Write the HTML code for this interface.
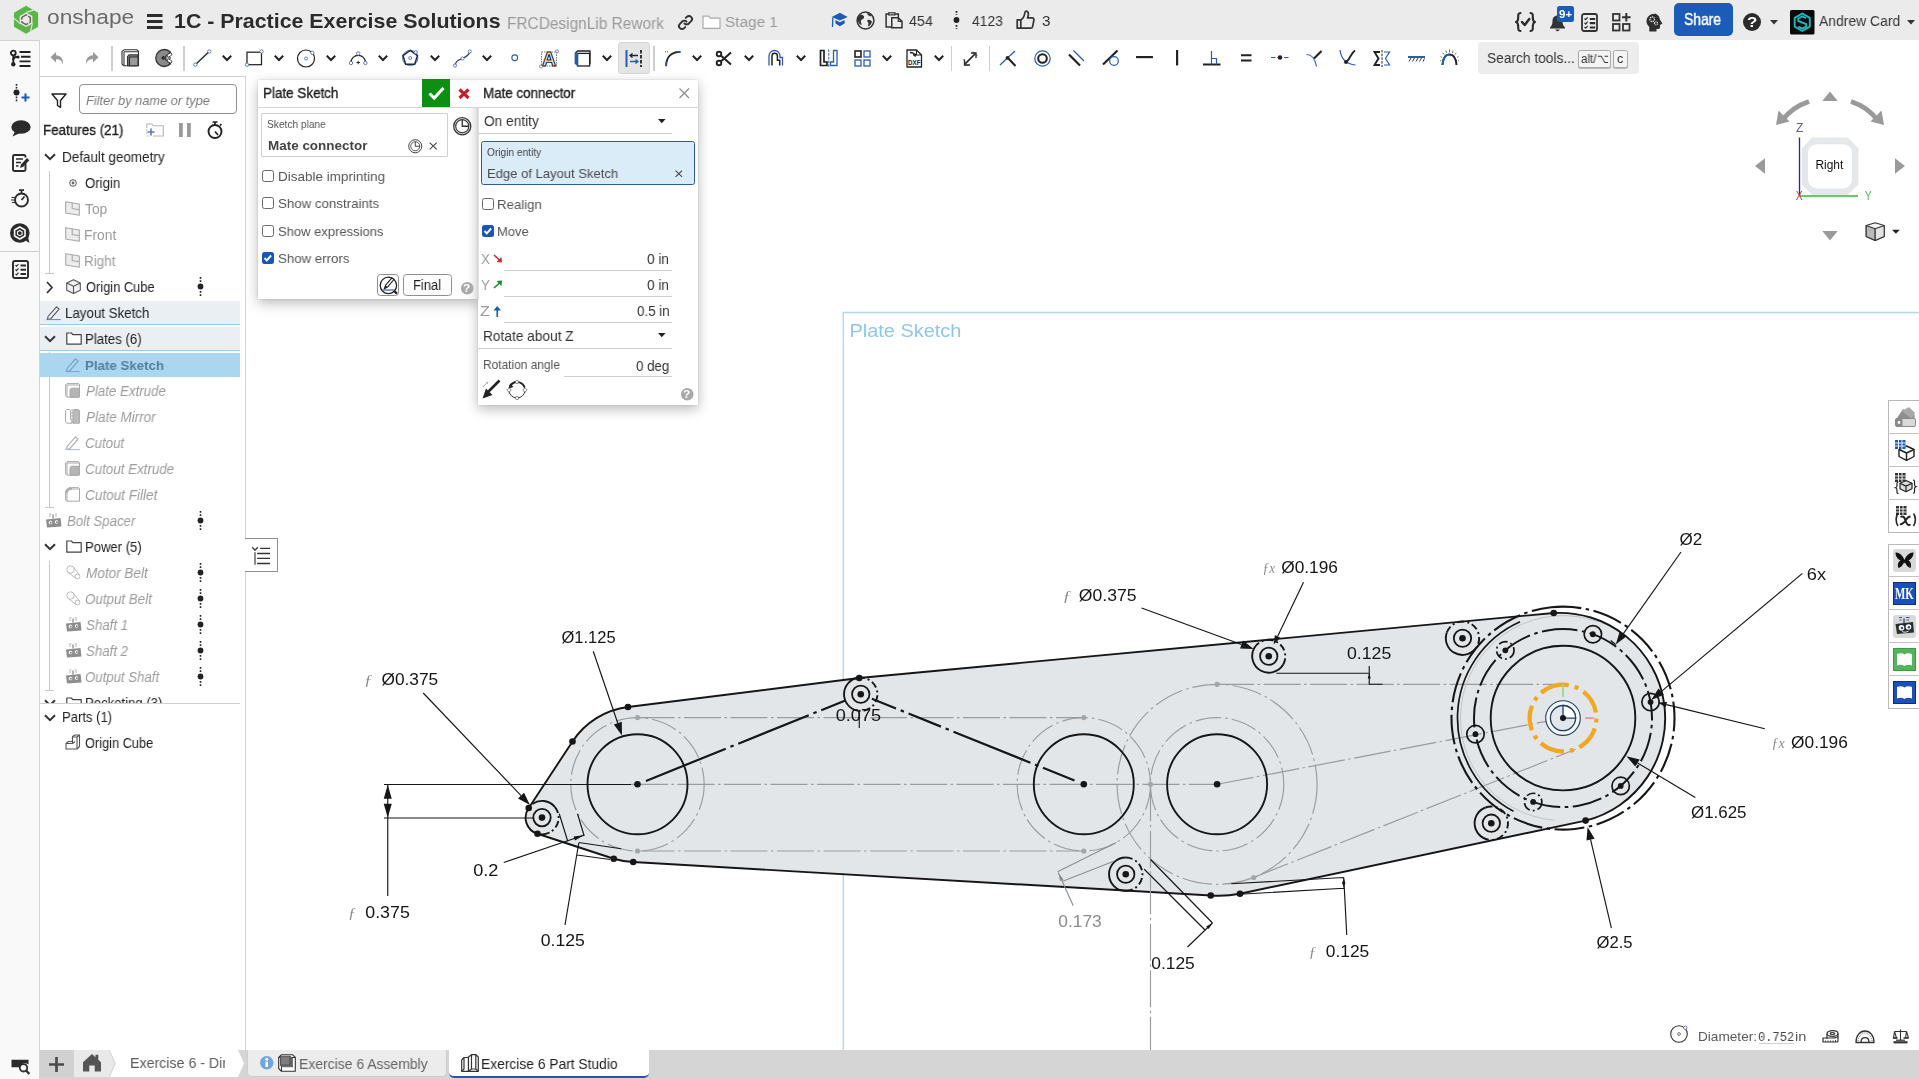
<!DOCTYPE html>
<html lang="en"><head><meta charset="utf-8"><title>1C - Practice Exercise Solutions | Exercise 6 Part Studio</title>
<style>
*{box-sizing:border-box;margin:0;padding:0}
html,body{width:1919px;height:1079px;overflow:hidden;background:#fff;font-family:"Liberation Sans",sans-serif;}
body{position:relative}
.t{position:absolute;white-space:nowrap;line-height:1;transform-origin:0 50%;display:block;will-change:transform}
.i{position:absolute;overflow:visible;display:block}
.abs{position:absolute}
#topbar{position:absolute;left:0;top:0;width:1919px;height:40px;background:#ebebeb}

#cv{position:absolute;left:0;top:0;will-change:transform}
#cv text{font-family:"Liberation Sans",sans-serif}

#toolbar{position:absolute;left:40px;top:40px;width:1879px;height:37px;background:#fff}
#rail{position:absolute;left:0;top:40px;width:40px;height:1039px;background:#f9f9f9;border-right:1px solid #d4d4d4;border-top:1px solid #d2d2d2}
.sep{position:absolute;top:45.500px;width:1.500px;height:25px;background:#cdcdcd}

#fpanel{position:absolute;left:40px;top:76px;width:206px;height:974px;background:#fff;border-right:1px solid #d4d4d4;border-top:1px solid #d0d0d0}
.rowbg{position:absolute;left:40px;width:200px}

.dlg{position:absolute;background:#fff;box-shadow:0 4px 12px rgba(0,0,0,.28),0 0 2px rgba(0,0,0,.14)}
.hl{position:absolute;height:1px;background:#cfcfcf}
.cb{position:absolute;width:11.500px;height:11.500px;border:1.200px solid #6a6a6a;border-radius:2.500px;background:#fff}
.cbc{position:absolute;width:11.500px;height:11.500px;border-radius:2.500px;background:#1b56b5}
.btn{position:absolute;border:1px solid #8f8f8f;border-radius:3.500px;background:#fff}

.sp{position:absolute;left:1888px;width:32px;background:#fff;border:1px solid #b9b9b9;border-right:none}
.spl{position:absolute;left:1888px;width:31px;height:1px;background:#c4c4c4}

#bbar{position:absolute;left:40px;top:1050px;width:1879px;height:29px;background:#d5d5d5}
</style></head>
<body>
<!-- part_canvas -->
<svg id="cv" width="1919" height="1079" viewBox="0 0 1919 1079">
<path d="M1919 312.500H843.200V1050" fill="none" stroke="#b3d8ee" stroke-width="1.400"/>
<text x="849.41" y="336.9" font-size="17.5" fill="#8fc7ea" textLength="111.92" lengthAdjust="spacingAndGlyphs" >Plate Sketch</text>
<path d="M528.75 808L572.5 741.5A77.800 77.800 0 0 1 628 707L859.25 678L1553.75 613A105.500 105.500 0 0 1 1585.6 820.6L1240 893.75A111.200 111.200 0 0 1 1210.75 895.5L633.25 862A77.800 77.800 0 0 1 613.75 858.75L537.5 833.75A16.700 16.700 0 0 1 528.75 808Z" fill="#e3e6e9" stroke="#161616" stroke-width="1.900" stroke-linejoin="round"/>
<g fill="none" stroke="#9b9b9b" stroke-width="1.150" stroke-dasharray="37 3.500 2.500 3.500">
<circle cx="637.5" cy="784.3" r="66.700" stroke-dasharray="26 4 2.500 4"/>
<circle cx="1083.8" cy="784.3" r="66.700" stroke-dasharray="26 4 2.500 4"/>
<circle cx="1217.1" cy="784.3" r="66.700" stroke-dasharray="26 4 2.500 4"/>
<circle cx="1217.1" cy="784.3" r="100" stroke-dasharray="30 4 2.500 4"/>
<path d="M637.5 717.600H1083.8"/><path d="M637.5 851H1083.8"/><path d="M631 784.300H1217.1"/>
<path d="M1150.500 784.300V1050"/>
<path d="M1217.1 684.300H1563"/>
<path d="M1217.1 784.3L1563.0 718.1"/>
<path d="M1253.750 877.500L1575.500 749.300"/>
</g>
<path d="M1554.07 820.21A102.5 102.5 0 1 1 1598.06 621.78" fill="none" stroke="#c2c2c2" stroke-width="1"/>
<circle cx="637.50" cy="717.60" r="2.6" fill="#a5a5a5"/>
<circle cx="637.50" cy="851.00" r="2.6" fill="#a5a5a5"/>
<circle cx="1083.80" cy="717.60" r="2.6" fill="#a5a5a5"/>
<circle cx="1083.80" cy="851.00" r="2.6" fill="#a5a5a5"/>
<circle cx="1150.50" cy="784.30" r="2.6" fill="#a5a5a5"/>
<circle cx="1217.10" cy="684.30" r="2.6" fill="#a5a5a5"/>
<circle cx="1253.75" cy="877.50" r="2.6" fill="#a5a5a5"/>
<circle cx="637.5" cy="784.3" r="50" fill="none" stroke="#161616" stroke-width="1.900"/>
<circle cx="1083.8" cy="784.3" r="50" fill="none" stroke="#161616" stroke-width="1.900"/>
<circle cx="1217.1" cy="784.3" r="50" fill="none" stroke="#161616" stroke-width="1.900"/>
<circle cx="1563.0" cy="718.1" r="72.300" fill="none" stroke="#161616" stroke-width="1.900"/>
<path d="M646.0 780.9L851.75 697.85" fill="none" stroke="#161616" stroke-width="2.200" stroke-dasharray="86 5 3.500 5 76 5 3.500 5 26 100"/>
<path d="M1074.5 780.55L869.75 697.85" fill="none" stroke="#161616" stroke-width="2.200" stroke-dasharray="34 5 3.500 5 83 5 3.500 5 35 5 3.500 5 26 100"/>
<path d="M1513.47 811.25A105.5 105.5 0 0 1 1520.09 621.72" fill="none" stroke="#161616" stroke-width="1.700"/>
<circle cx="1563.0" cy="718.1" r="89" fill="none" stroke="#161616" stroke-width="2" stroke-dasharray="30 4.500 3.500 4.500" transform="rotate(-100 1563.0 718.1)"/>
<circle cx="1563.0" cy="718.1" r="111.500" fill="none" stroke="#161616" stroke-width="2.100" stroke-dasharray="30 4.500 3.500 4.500" transform="rotate(-96 1563.0 718.1)"/>
<circle cx="1592.86" cy="634.26" r="8.700" fill="none" stroke="#161616" stroke-width="1.700"/><circle cx="1592.86" cy="634.26" r="2.9" fill="#161616"/>
<circle cx="1505.32" cy="650.32" r="8.700" fill="none" stroke="#161616" stroke-width="1.700" stroke-dasharray="9 3 2 3"/><circle cx="1505.32" cy="650.32" r="2.9" fill="#161616"/>
<circle cx="1475.46" cy="734.17" r="8.700" fill="none" stroke="#161616" stroke-width="1.700"/><circle cx="1475.46" cy="734.17" r="2.9" fill="#161616"/>
<circle cx="1533.14" cy="801.94" r="8.700" fill="none" stroke="#161616" stroke-width="1.700" stroke-dasharray="9 3 2 3"/><circle cx="1533.14" cy="801.94" r="2.9" fill="#161616"/>
<circle cx="1620.68" cy="785.88" r="8.700" fill="none" stroke="#161616" stroke-width="1.700"/><circle cx="1620.68" cy="785.88" r="2.9" fill="#161616"/>
<circle cx="1650.54" cy="702.03" r="8.700" fill="none" stroke="#161616" stroke-width="1.700"/><circle cx="1650.54" cy="702.03" r="2.9" fill="#161616"/>
<circle cx="542" cy="817.6" r="8.700" fill="none" stroke="#161616" stroke-width="1.800"/><circle cx="542.00" cy="817.60" r="3.3" fill="#161616"/>
<circle cx="860.75" cy="694.25" r="8.700" fill="none" stroke="#161616" stroke-width="1.800"/><circle cx="860.75" cy="694.25" r="3.3" fill="#161616"/>
<circle cx="1268.75" cy="656.25" r="8.700" fill="none" stroke="#161616" stroke-width="1.800"/><circle cx="1268.75" cy="656.25" r="3.3" fill="#161616"/>
<circle cx="1462.5" cy="638.25" r="8.700" fill="none" stroke="#161616" stroke-width="1.800"/><circle cx="1462.50" cy="638.25" r="3.3" fill="#161616"/>
<circle cx="1491.3" cy="823.2" r="8.700" fill="none" stroke="#161616" stroke-width="1.800"/><circle cx="1491.30" cy="823.20" r="3.3" fill="#161616"/>
<circle cx="1125.75" cy="874.25" r="8.700" fill="none" stroke="#161616" stroke-width="1.800"/><circle cx="1125.75" cy="874.25" r="3.3" fill="#161616"/>
<path d="M532.42 803.92A16.7 16.7 0 0 1 554.79 806.87" fill="none" stroke="#161616" stroke-width="1.900"/>
<path d="M554.79 806.87A16.7 16.7 0 0 1 549.58 832.48" fill="none" stroke="#161616" stroke-width="1.900" stroke-dasharray="7 3 2 3"/>
<path d="M549.58 832.48A16.7 16.7 0 0 1 536.29 833.29" fill="none" stroke="#161616" stroke-width="1.900"/>
<path d="M857.85 710.70A16.7 16.7 0 0 1 857.85 677.80" fill="none" stroke="#161616" stroke-width="1.900"/>
<path d="M857.85 677.80A16.7 16.7 0 1 1 857.85 710.70" fill="none" stroke="#161616" stroke-width="1.900" stroke-dasharray="7 3 2 3"/>
<path d="M1283.21 664.60A16.7 16.7 0 0 1 1254.29 647.90" fill="none" stroke="#161616" stroke-width="1.900"/>
<path d="M1254.29 647.90A16.7 16.7 0 0 1 1283.21 664.60" fill="none" stroke="#161616" stroke-width="1.900" stroke-dasharray="7 3 2 3"/>
<path d="M1475.29 648.98A16.7 16.7 0 0 1 1446.81 632.54" fill="none" stroke="#161616" stroke-width="1.900"/>
<path d="M1446.81 632.54A16.7 16.7 0 1 1 1475.29 648.98" fill="none" stroke="#161616" stroke-width="1.900" stroke-dasharray="7 3 2 3"/>
<path d="M1488.40 839.65A16.7 16.7 0 0 1 1485.59 807.51" fill="none" stroke="#161616" stroke-width="1.900"/>
<path d="M1485.59 807.51A16.7 16.7 0 1 1 1488.40 839.65" fill="none" stroke="#161616" stroke-width="1.900" stroke-dasharray="7 3 2 3"/>
<path d="M1125.75 890.95A16.7 16.7 0 0 1 1125.75 857.55" fill="none" stroke="#161616" stroke-width="1.900"/>
<path d="M1125.75 857.55A16.7 16.7 0 0 1 1125.75 890.95" fill="none" stroke="#161616" stroke-width="1.900" stroke-dasharray="7 3 2 3"/>
<circle cx="528.75" cy="808.00" r="3.3" fill="#161616"/>
<circle cx="572.50" cy="741.50" r="3.3" fill="#161616"/>
<circle cx="628.00" cy="707.00" r="3.3" fill="#161616"/>
<circle cx="859.25" cy="678.00" r="3.3" fill="#161616"/>
<circle cx="1553.75" cy="613.00" r="3.3" fill="#161616"/>
<circle cx="1585.60" cy="820.60" r="3.3" fill="#161616"/>
<circle cx="1240.00" cy="893.75" r="3.3" fill="#161616"/>
<circle cx="1210.75" cy="895.50" r="3.3" fill="#161616"/>
<circle cx="633.25" cy="862.00" r="3.3" fill="#161616"/>
<circle cx="613.75" cy="858.75" r="3.3" fill="#161616"/>
<circle cx="537.50" cy="833.75" r="3.3" fill="#161616"/>
<circle cx="637.50" cy="784.30" r="3.3" fill="#161616"/>
<circle cx="1083.80" cy="784.30" r="3.3" fill="#161616"/>
<circle cx="1217.10" cy="784.30" r="3.3" fill="#161616"/>
<circle cx="1563.0" cy="718.1" r="33.400" fill="none" stroke="#f2a724" stroke-width="4.300" stroke-dasharray="25 6 4 6" transform="rotate(-123 1563.0 718.1)"/>
<path d="M1563.0 684.1V697.1" stroke="#96d98a" stroke-width="1.800"/><path d="M1585.0 718.1H1594.0" stroke="#ec96a6" stroke-width="1.800"/>
<circle cx="1563.0" cy="718.1" r="17.300" fill="#f4f7fa" stroke="#24405c" stroke-width="1.100"/><circle cx="1563.0" cy="718.1" r="12.600" fill="#e1e7ed" stroke="#24405c" stroke-width="1.300"/>
<path d="M1563.0 718.1V705.5A12.600 12.600 0 0 1 1575.6 718.1z" fill="#fff" stroke="#24405c" stroke-width="1.300"/>
<circle cx="1563.00" cy="718.10" r="3" fill="#161616"/>
<g fill="none" stroke="#161616" stroke-width="1.150">
<path d="M384 784.500H631M384 818H534M387.750 784.500V896"/>
<path d="M503.750 862.500L583.750 835.300M559.250 813.750L567.800 841.500M577.500 813.750L584.200 836"/>
<path d="M565 925L578.750 843M578.750 842.500L621.250 848.750M577.300 855L610 859.500"/>
<path d="M1276.250 673.250H1369.250M1369.250 666V684.250H1382.500"/>
<path d="M1187.500 947L1212.500 923M1150.500 859.500L1212.500 923M1144.250 869.250L1205 930"/>
<path d="M1346.750 935L1343.750 877.500M1231.250 883.750L1343.750 877.500M1240 894.250L1343.750 888.250"/>
<path d="M859.250 712V728"/>
</g>
<g fill="none" stroke="#8d8d8d" stroke-width="1.100"><path d="M1073.250 905.750L1058.250 872.500M1057.500 871.750L1116.250 842.500M1062 881.500L1113.750 861.250"/></g>
<path d="M1058.50 873.00L1059.92 881.12L1063.58 879.50z" fill="#8d8d8d"/>
<path d="M387.75 784.80L383.75 798.80L391.75 798.80z" fill="#161616"/><path d="M387.75 817.70L391.75 803.70L383.75 803.70z" fill="#161616"/>
<path d="M583.75 835.30L573.57 836.44L574.99 840.60z" fill="#161616"/>
<path d="M1343.75 877.80L1342.15 883.80L1345.35 883.80z" fill="#161616"/><path d="M1343.75 888.20L1345.35 882.20L1342.15 882.20z" fill="#161616"/>
<path d="M1369.25 673.50L1367.75 678.50L1370.75 678.50z" fill="#161616"/>
<path d="M1212.50 923.00L1206.15 926.46L1208.61 929.09z" fill="#161616"/>
<path d="M530.00 805.00L524.07 792.69L517.99 798.49z" fill="#161616"/><path d="M521.03 795.59L423.25 693.00" stroke="#161616" stroke-width="1.15"/>
<path d="M622.00 735.50L621.78 721.84L613.83 724.55z" fill="#161616"/><path d="M617.80 723.20L593.25 651.25" stroke="#161616" stroke-width="1.15"/>
<path d="M1253.70 649.00L1242.93 640.59L1240.05 648.48z" fill="#161616"/><path d="M1241.49 644.53L1141.60 608.00" stroke="#161616" stroke-width="1.15"/>
<path d="M1273.70 644.50L1280.29 637.68L1274.88 635.09z" fill="#161616"/><path d="M1277.59 636.38L1303.50 582.30" stroke="#161616" stroke-width="1.15"/>
<path d="M1615.70 644.50L1626.63 636.30L1619.77 631.46z" fill="#161616"/><path d="M1623.20 633.88L1681.00 552.00" stroke="#161616" stroke-width="1.15"/>
<path d="M1651.20 700.00L1663.86 694.87L1658.47 688.43z" fill="#161616"/><path d="M1661.17 691.65L1802.40 573.40" stroke="#161616" stroke-width="1.15"/>
<path d="M1657.70 702.50L1665.82 707.17L1667.06 702.12z" fill="#161616"/><path d="M1666.44 704.65L1764.80 728.80" stroke="#161616" stroke-width="1.15"/>
<path d="M1626.40 756.30L1635.39 766.59L1639.71 759.38z" fill="#161616"/><path d="M1637.55 762.98L1695.30 797.60" stroke="#161616" stroke-width="1.15"/>
<path d="M1587.60 827.00L1586.49 840.62L1594.66 838.69z" fill="#161616"/><path d="M1590.58 839.65L1611.40 928.20" stroke="#161616" stroke-width="1.15"/>
<path d="M1615.700 644.500l-5 -4" stroke="#161616" stroke-width="1.150"/>
<text x="348" y="917.5" font-size="15" fill="#8a8a8a" font-style="italic" style="font-family:'Liberation Serif',serif" textLength="8.00" lengthAdjust="spacingAndGlyphs">ƒ</text><text x="365.22" y="917.5" font-size="16.2" fill="#161616" textLength="44.61" lengthAdjust="spacingAndGlyphs" >0.375</text>
<text x="473.21" y="876.25" font-size="16.2" fill="#161616" textLength="25.20" lengthAdjust="spacingAndGlyphs" >0.2</text>
<text x="540.72" y="946.25" font-size="16.2" fill="#161616" textLength="44.10" lengthAdjust="spacingAndGlyphs" >0.125</text>
<text x="364" y="685" font-size="15" fill="#8a8a8a" font-style="italic" style="font-family:'Liberation Serif',serif" textLength="8.50" lengthAdjust="spacingAndGlyphs">ƒ</text><text x="381.48" y="685" font-size="16.2" fill="#161616" textLength="56.71" lengthAdjust="spacingAndGlyphs" >Ø0.375</text>
<text x="561.50" y="643" font-size="16.2" fill="#161616" textLength="54.16" lengthAdjust="spacingAndGlyphs" >Ø1.125</text>
<text x="835.71" y="720.5" font-size="16.2" fill="#161616" textLength="45.38" lengthAdjust="spacingAndGlyphs" >0.075</text>
<text x="1062.4" y="601.4" font-size="15" fill="#8a8a8a" font-style="italic" style="font-family:'Liberation Serif',serif" textLength="8.90" lengthAdjust="spacingAndGlyphs">ƒ</text><text x="1078.77" y="601.4" font-size="16.2" fill="#161616" textLength="57.73" lengthAdjust="spacingAndGlyphs" >Ø0.375</text>
<text x="1262.6" y="573.4" font-size="15" fill="#8a8a8a" font-style="italic" style="font-family:'Liberation Serif',serif" textLength="12.40" lengthAdjust="spacingAndGlyphs">ƒx</text><text x="1281.18" y="573.4" font-size="16.2" fill="#161616" textLength="56.81" lengthAdjust="spacingAndGlyphs" >Ø0.196</text>
<text x="1346.97" y="658.9" font-size="16.2" fill="#161616" textLength="44.35" lengthAdjust="spacingAndGlyphs" >0.125</text>
<text x="1058.23" y="927" font-size="16.2" fill="#8d8d8d" textLength="43.58" lengthAdjust="spacingAndGlyphs" >0.173</text>
<text x="1151.23" y="968.75" font-size="16.2" fill="#161616" textLength="43.58" lengthAdjust="spacingAndGlyphs" >0.125</text>
<text x="1308.75" y="957" font-size="15" fill="#8a8a8a" font-style="italic" style="font-family:'Liberation Serif',serif" textLength="7.50" lengthAdjust="spacingAndGlyphs">ƒ</text><text x="1325.73" y="957" font-size="16.2" fill="#161616" textLength="43.58" lengthAdjust="spacingAndGlyphs" >0.125</text>
<text x="1679.49" y="544.5" font-size="16.2" fill="#161616" textLength="22.76" lengthAdjust="spacingAndGlyphs" >Ø2</text>
<text x="1806.89" y="580" font-size="16.2" fill="#161616" textLength="19.22" lengthAdjust="spacingAndGlyphs" >6x</text>
<text x="1771.6" y="747.5" font-size="15" fill="#8a8a8a" font-style="italic" style="font-family:'Liberation Serif',serif" textLength="13.20" lengthAdjust="spacingAndGlyphs">ƒx</text><text x="1791.08" y="747.5" font-size="16.2" fill="#161616" textLength="56.81" lengthAdjust="spacingAndGlyphs" >Ø0.196</text>
<text x="1690.99" y="817.6" font-size="16.2" fill="#161616" textLength="55.48" lengthAdjust="spacingAndGlyphs" >Ø1.625</text>
<text x="1596.50" y="948.25" font-size="16.2" fill="#161616" textLength="36.13" lengthAdjust="spacingAndGlyphs" >Ø2.5</text>
</svg>
<!-- part_top -->
<div id="topbar"></div>
<svg class="i" style="left:0;top:0" width="45" height="40" viewBox="0 0 45 40"><path d="M26.05 5.80L13.97 12.78L13.97 26.73L26.05 33.70L38.13 26.73L38.13 12.78z" fill="#5cb647"/><path d="M26.05 12.45L19.73 16.10L19.73 23.40L26.05 27.05L32.37 23.40L32.37 16.10z" fill="#ebebeb"/><path d="M26.05 12.45L33.54 10.12M19.73 23.40L13.97 18.08M32.37 23.40L30.64 31.05" stroke="#ebebeb" stroke-width="1.100" fill="none"/><path d="M27.11 15.46L26.05 14.85L21.81 17.30L21.81 19.75M21.81 20.97L21.81 22.20L26.05 24.65L28.17 23.43M29.23 22.81L30.29 22.20L30.29 17.30L28.17 16.07" stroke="#666" stroke-width="1.500" fill="none" stroke-linejoin="round"/></svg>
<span class="t" style="left:47.09px;top:7.00px;font-size:20.5px;color:#6a6a6a;transform:scaleX(1.1079);">onshape</span>
<svg class="i" style="left:147.2px;top:14px;" width="15.5" height="15" viewBox="0 0 15.5 15"><path d="M0 1.5H15.5M0 7.5H15.5M0 13.5H15.5" stroke="#2b2b2b" stroke-width="3"/></svg>
<span class="t" style="left:173.72px;top:10.00px;font-size:21px;color:#2b2b2b;transform:scaleX(1.0173);font-weight:bold;">1C - Practice Exercise Solutions</span>
<span class="t" style="left:507.47px;top:16.00px;font-size:16px;color:#9a9a9a;transform:scaleX(0.9641);">FRCDesignLib Rework</span>
<svg class="i" style="left:678px;top:15px;" width="15" height="15" viewBox="0 0 15 15"><g fill="none" stroke="#333" stroke-width="1.9" stroke-linecap="round"><path d="M6.5 8.5 a3 3 0 0 0 4.3 0 l2.3-2.3 a3 3 0 0 0-4.3-4.3 l-1 1"/><path d="M8.5 6.5 a3 3 0 0 0-4.3 0 l-2.3 2.3 a3 3 0 0 0 4.3 4.3 l1-1"/></g></svg>
<svg class="i" style="left:702px;top:15px;" width="19" height="14" viewBox="0 0 19 14"><path d="M1 1.2h5.6l1.6 1.9H18v10.2H1z" fill="#fff" stroke="#aaa" stroke-width="1.2" stroke-linejoin="round"/></svg>
<span class="t" style="left:725.39px;top:14.00px;font-size:15.5px;color:#9a9a9a;transform:scaleX(0.9889);">Stage 1</span>
<svg class="i" style="left:829.5px;top:11.5px;" width="19" height="16" viewBox="0 0 19 16"><path d="M1.750 5.100L9.900 0.700 17.700 5.100 9.900 8.600z" fill="#1b5cb8"/><path d="M5.500 8v3.600L9.900 14.200 14.600 11.600V8L9.900 10.300z" fill="#1b5cb8"/><path d="M2.800 5.600L2.500 15" stroke="#1b5cb8" stroke-width="1.300"/></svg>
<svg class="i" style="left:855.5px;top:11px;" width="19" height="19" viewBox="0 0 19 19"><circle cx="9.5" cy="9.5" r="8.4" fill="#ececec" stroke="#333" stroke-width="1.5"/><path d="M5 3.5c2 .3 3.5 1.5 3 3.2-.5 1.6-2.6 1.3-3.1 3-.4 1.5 1 2.7.6 4.6C3.200 13 1.6 11 1.7 8.500 1.800 6.500 3 4.500 5 3.500Z M11.500 9c1.800-.5 3.800.3 4.500 1.800-.6 2.300-2 3.900-3.800 4.800-.6-1.400.6-2.400.1-3.800-.4-1.100-1.600-1.500-.8-2.800Z M11 1.800c2 .4 3.600 1.500 4.700 3.100-1.200.6-2.600.3-3.400-.6-.700-.8-1.300-1.500-1.300-2.500Z" fill="#333"/></svg>
<svg class="i" style="left:884.5px;top:11.5px;" width="18" height="17" viewBox="0 0 18 17"><g fill="none" stroke="#333" stroke-width="1.500" stroke-linejoin="miter"><path d="M4 1.900H1.100V15H6.800M9.900 1.900H13.300V5.500"/><rect x="3.700" y="0.800" width="6.200" height="2.100" stroke-width="1.200"/><path d="M6.750 5.700H13.300L17 9.400V15.700H6.750z" fill="#ebebeb"/><path d="M13.300 5.700V9.400H17" stroke-width="1.200"/></g></svg>
<span class="t" style="left:909.22px;top:14.00px;font-size:14.5px;color:#333;transform:scaleX(0.9791);">454</span>
<svg class="i" style="left:953px;top:11px;" width="7" height="18" viewBox="0 0 7 18"><circle cx="3.500" cy="9" r="2.900" fill="#222"/><path d="M3.500 0v4M3.500 14v4" stroke="#222" stroke-width="1.700" stroke-dasharray="1.800 1.400"/></svg>
<span class="t" style="left:972.22px;top:14.00px;font-size:14.5px;color:#333;transform:scaleX(0.9534);">4123</span>
<svg class="i" style="left:1016px;top:10px;" width="19" height="20" viewBox="0 0 19 20"><path d="M1.200 9.800h3.600v8.400H1.200z M4.800 10.200c1.800-1.200 3.300-3.400 3.700-5.600.2-1.400.1-3 1.300-3.400 1.500-.4 2.600 1.200 2.600 3 0 1.300-.5 2.600-.9 3.700h4.700c1.200 0 1.900 1 1.700 2.100l-1.300 6.600c-.2 1-.9 1.600-1.900 1.600H4.800" fill="none" stroke="#333" stroke-width="1.700" stroke-linejoin="round"/></svg>
<span class="t" style="left:1042.04px;top:14.00px;font-size:14.5px;color:#333;transform:scaleX(1.0556);">3</span>
<svg class="i" style="left:1515px;top:12px;" width="21" height="20" viewBox="0 0 21 20"><g fill="none" stroke="#2b2b2b" stroke-width="2.100" stroke-linecap="round" stroke-linejoin="round"><path d="M5.500 1C3 1 3.200 3 3.200 5.500 3.200 8 2.800 9.500 1 10c1.800.5 2.200 2 2.200 4.500 0 2.500-.2 4.500 2.300 4.500"/><path d="M15.500 1c2.500 0 2.300 2 2.300 4.500 0 2.500.4 4 2.200 4.500-1.800.5-2.200 2-2.200 4.500 0 2.500.2 4.500-2.300 4.500"/><path d="M7 10l2.700 3 4.600-6" stroke-width="2.500"/></g></svg>
<svg class="i" style="left:1549px;top:14px;" width="17" height="18" viewBox="0 0 17 18"><path d="M8.500 1.500c3 0 5 2.300 5 5.500 0 3.500 1 5 2.500 6.500v1H1v-1C2.500 12 3.500 10.500 3.500 7c0-3.200 2-5.500 5-5.500z" fill="#333"/><path d="M6.300 15.500a2.300 2.300 0 0 0 4.400 0z" fill="#333"/></svg>
<div class="abs" style="left:1557px;top:6px;width:16.500px;height:16px;background:#1b5cb8;border-radius:2.500px"></div>
<span class="t" style="left:1558.86px;top:9.00px;font-size:11.5px;color:#fff;transform:scaleX(0.9903);font-weight:bold;">9+</span>
<svg class="i" style="left:1581px;top:12.5px;" width="17" height="19" viewBox="0 0 17 19"><rect x="1" y="1" width="15" height="17" rx="2" fill="none" stroke="#333" stroke-width="1.800"/><path d="M3.500 5.500l1.200 1.200 2-2.400M3.500 9.800l1.200 1.200 2-2.400M3.500 14l1.200 1.200 2-2.400" fill="none" stroke="#333" stroke-width="1.200"/><path d="M8.800 6h5.400M8.800 10.200h5.400M8.800 14.500h5.400" stroke="#2b2b2b" stroke-width="2.200"/></svg>
<svg class="i" style="left:1612px;top:12.5px;" width="19" height="19" viewBox="0 0 19 19"><g fill="none" stroke="#333" stroke-width="1.800"><rect x="1" y="1" width="6.500" height="6.500"/><rect x="1" y="11" width="6.500" height="6.500"/><rect x="11" y="11" width="6.500" height="6.500"/><path d="M14.300 0v8.500M10 4.300h8.600" stroke-width="2"/></g></svg>
<svg class="i" style="left:1645px;top:12.5px;" width="18" height="19" viewBox="0 0 18 19"><g transform="translate(18 0) scale(-1 1)"><path d="M8.500.8c4.500 0 8 3.200 8 7.400 0 2.600-1.300 4.300-2.800 5.700v4.600H6.500v-2.600H4.600c-1 0-1.600-.6-1.600-1.600v-2.400L1.200 11c-.5-.2-.6-.7-.3-1.100L3 6.800C3.500 3.200 5.500.8 8.500.8z" fill="#2e2e2e"/><circle cx="10.800" cy="6.300" r="2.300" fill="none" stroke="#ebebeb" stroke-width="1.300" stroke-dasharray="1.100 0.700"/><circle cx="7" cy="10.300" r="1.500" fill="none" stroke="#ebebeb" stroke-width="1.100" stroke-dasharray="0.900 0.600"/></g></svg>
<div class="abs" style="left:1673.500px;top:3px;width:59px;height:33px;background:#1b5cb8;border-radius:5px"></div>
<span class="t" style="left:1684.44px;top:11.00px;font-size:16.5px;color:#fff;transform:scaleX(0.8424);-webkit-text-stroke:0.450px #fff;">Share</span>
<svg class="i" style="left:1743px;top:13px;" width="18" height="18" viewBox="0 0 18 18"><circle cx="9" cy="9" r="9" fill="#2b2b2b"/></svg>
<span class="t" style="left:1746.92px;top:14.00px;font-size:15.5px;color:#fff;transform:scaleX(1.0918);font-weight:bold;">?</span>
<svg class="i" style="left:1770px;top:19.5px;" width="8" height="4.5" viewBox="0 0 8 4.5"><path d="M0 0h8L4 4.500z" fill="#333"/></svg>
<svg class="i" style="left:1789.5px;top:9.5px;" width="24.5" height="24.5" viewBox="0 0 24.5 24.5"><rect width="24.500" height="24.500" rx="1.500" fill="#0a0a0a"/><g fill="none" stroke="#22b5c0" stroke-width="1.900" stroke-linejoin="round"><path d="M12.250 3.500L19.800 7.900V16.600L12.250 21 4.700 16.600V7.900z"/><path d="M16 8.200 12.250 6.300 8.300 8.500V11l7.900 3.200v2.500l-3.950 2-3.950-2"/></g></svg>
<span class="t" style="left:1819.00px;top:13.00px;font-size:15.5px;color:#383838;transform:scaleX(0.8985);">Andrew Card</span>
<svg class="i" style="left:1907px;top:19.5px;" width="8" height="4.5" viewBox="0 0 8 4.5"><path d="M0 0h8L4 4.500z" fill="#333"/></svg>
<!-- part_toolbar -->
<div id="toolbar"></div><div id="rail"></div>
<svg class="i" style="left:10px;top:49px;" width="21" height="19" viewBox="0 0 21 19"><g fill="none" stroke="#222" stroke-width="1.900"><circle cx="3.300" cy="4" r="2.400"/><path d="M3.300 6.500v7"/><path d="M3.300 11c0-2 1-3 3-3h1.200" /><path d="M9.500 3h11M11 7.700h9.500M9.500 12.400h11M9.500 17h11"/></g><circle cx="3.300" cy="15.200" r="2.200" fill="#222"/><circle cx="8" cy="8" r="1.600" fill="#222"/></svg>
<svg class="i" style="left:50px;top:50.5px;" width="14" height="14" viewBox="0 0 14 14"><path d="M6 1L0.500 6.200 6 11.500V8.200c3.600-.2 6 1 7 5.300C13.600 8 10.500 4.500 6 4.300z" fill="#999"/></svg>
<svg class="i" style="left:85px;top:50.5px;transform:scaleX(-1);" width="14" height="14" viewBox="0 0 14 14"><path d="M6 1L0.500 6.200 6 11.500V8.200c3.600-.2 6 1 7 5.300C13.600 8 10.500 4.500 6 4.300z" fill="#999"/></svg>
<div class="sep" style="left:111px"></div>
<div class="sep" style="left:183px"></div>
<div class="sep" style="left:653px"></div>
<div class="sep" style="left:950.5px"></div>
<div class="sep" style="left:988.5px"></div>
<svg class="i" style="left:121px;top:49px;" width="18" height="18" viewBox="0 0 18 18"><g stroke="#333" stroke-width="1.100" stroke-linejoin="round"><path d="M1 2.500L3 0.800h13l1.500 1.500v14.500H3L1 15z" fill="#fff"/><path d="M3 2.800h14.500M3 2.800V16.800" fill="none"/><path d="M6.500 7.500l1.500-1.700h9v9.500l-1.500 1.500H6.500z" fill="#777"/><path d="M8.500 8h8.500v8.800H8.500z" fill="#999"/></g></svg>
<svg class="i" style="left:155px;top:49px;" width="18" height="18" viewBox="0 0 18 18"><path d="M9 9L15.500 3.200A8.500 8.500 0 1 0 15.500 14.800z" fill="#8a8a8a" stroke="#333" stroke-width="1.300"/><ellipse cx="14.500" cy="6" rx="2.600" ry="1.500" transform="rotate(-35 14.500 6)" fill="#fff" stroke="#333" stroke-width="0.900"/><ellipse cx="14.500" cy="12" rx="2.600" ry="1.500" transform="rotate(35 14.500 12)" fill="#fff" stroke="#333" stroke-width="0.900"/><path d="M6.500 9H17M9 7l-2.500 2L9 11" fill="none" stroke="#111" stroke-width="1" stroke-dasharray="2.500 1"/></svg>
<svg class="i" style="left:193px;top:49px;" width="19" height="18" viewBox="0 0 19 18"><path d="M2.500 15.500L16 2.800" stroke="#222" stroke-width="1.300"/><circle cx="2.300" cy="15.700" r="1.700" fill="#fff" stroke="#5671b0" stroke-width="0.900"/><circle cx="16.300" cy="2.500" r="1.700" fill="#fff" stroke="#5671b0" stroke-width="0.900"/></svg>
<svg class="i" style="left:222px;top:55.2px;" width="10" height="6" viewBox="0 0 10 6"><path d="M0.800 0.800L5 5 9.200 0.800" fill="none" stroke="#222" stroke-width="2"/></svg>
<svg class="i" style="left:245px;top:49px;" width="19" height="18" viewBox="0 0 19 18"><rect x="2" y="3.200" width="14.500" height="12.500" fill="none" stroke="#222" stroke-width="1.250"/><circle cx="2" cy="15.700" r="1.700" fill="#fff" stroke="#5671b0" stroke-width="0.900"/><circle cx="16.500" cy="2.500" r="1.700" fill="#fff" stroke="#5671b0" stroke-width="0.900"/></svg>
<svg class="i" style="left:274px;top:55.2px;" width="10" height="6" viewBox="0 0 10 6"><path d="M0.800 0.800L5 5 9.200 0.800" fill="none" stroke="#222" stroke-width="2"/></svg>
<svg class="i" style="left:296.5px;top:48.5px;" width="19" height="19" viewBox="0 0 19 19"><circle cx="9" cy="9.500" r="8.500" fill="none" stroke="#222" stroke-width="1.200"/><circle cx="9" cy="9.500" r="1.500" fill="#fff" stroke="#5671b0" stroke-width="0.900"/><circle cx="15.300" cy="3.800" r="1.700" fill="#fff" stroke="#5671b0" stroke-width="0.900"/></svg>
<svg class="i" style="left:326px;top:55.2px;" width="10" height="6" viewBox="0 0 10 6"><path d="M0.800 0.800L5 5 9.200 0.800" fill="none" stroke="#222" stroke-width="2"/></svg>
<svg class="i" style="left:349px;top:48.5px;" width="19" height="19" viewBox="0 0 19 19"><path d="M2 13.500A7.200 7.200 0 0 1 16.400 13.500" fill="none" stroke="#222" stroke-width="1.250"/><circle cx="2" cy="14" r="1.700" fill="#fff" stroke="#5671b0" stroke-width="0.900"/><circle cx="16.400" cy="14" r="1.700" fill="#fff" stroke="#5671b0" stroke-width="0.900"/><circle cx="9.200" cy="4.500" r="1.700" fill="#fff" stroke="#5671b0" stroke-width="0.900"/><path d="M7.500 13.500h3.400M9.200 11.800v3.400" stroke="#222" stroke-width="1"/></svg>
<svg class="i" style="left:377.5px;top:55.2px;" width="10" height="6" viewBox="0 0 10 6"><path d="M0.800 0.800L5 5 9.200 0.800" fill="none" stroke="#222" stroke-width="2"/></svg>
<svg class="i" style="left:400.5px;top:48px;" width="19" height="19" viewBox="0 0 19 19"><circle cx="9.200" cy="10" r="7.700" fill="none" stroke="#5671b0" stroke-width="0.900"/><path d="M9.200 2.300L16.500 7.600 13.700 16.200H4.700L1.900 7.600z" fill="none" stroke="#1d2a44" stroke-width="1.500" stroke-linejoin="round"/><circle cx="9.200" cy="10" r="1.500" fill="#fff" stroke="#5671b0" stroke-width="0.900"/><circle cx="14.800" cy="4.200" r="1.600" fill="#fff" stroke="#5671b0" stroke-width="0.900"/></svg>
<svg class="i" style="left:429.5px;top:55.2px;" width="10" height="6" viewBox="0 0 10 6"><path d="M0.800 0.800L5 5 9.200 0.800" fill="none" stroke="#222" stroke-width="2"/></svg>
<svg class="i" style="left:452.5px;top:48.5px;" width="19" height="19" viewBox="0 0 19 19"><path d="M2 16.500C3 10.500 6.500 11 9.500 9.500S15.500 7 16.800 2.800" fill="none" stroke="#39435c" stroke-width="1.300"/><circle cx="2" cy="16.500" r="1.600" fill="#fff" stroke="#5671b0" stroke-width="0.900"/><circle cx="9.500" cy="9.500" r="1.600" fill="#fff" stroke="#5671b0" stroke-width="0.900"/><circle cx="16.800" cy="2.500" r="1.600" fill="#fff" stroke="#5671b0" stroke-width="0.900"/></svg>
<svg class="i" style="left:482px;top:55.2px;" width="10" height="6" viewBox="0 0 10 6"><path d="M0.800 0.800L5 5 9.200 0.800" fill="none" stroke="#222" stroke-width="2"/></svg>
<svg class="i" style="left:510.5px;top:54px;" width="7.5" height="7.5" viewBox="0 0 7.5 7.5"><circle cx="3.750" cy="3.750" r="2.900" fill="#fff" stroke="#2a5db0" stroke-width="1.100"/></svg>
<svg class="i" style="left:538.5px;top:48.5px;" width="20" height="19" viewBox="0 0 20 19"><rect x="2.500" y="3" width="15" height="14" fill="none" stroke="#555" stroke-width="0.800" stroke-dasharray="1.500 1"/><text x="3" y="17" font-size="19.500" font-weight="bold" font-family="Liberation Sans,sans-serif" fill="#fff" stroke="#222" stroke-width="1.100" textLength="14" lengthAdjust="spacingAndGlyphs">A</text><circle cx="2" cy="17.500" r="1.500" fill="#fff" stroke="#5671b0" stroke-width="0.800"/><circle cx="18" cy="2.300" r="1.500" fill="#fff" stroke="#5671b0" stroke-width="0.800"/></svg>
<svg class="i" style="left:573.5px;top:49.5px;" width="17" height="17" viewBox="0 0 17 17"><path d="M1 3.500L3.500 1h12.500v12.500L13.500 16" fill="none" stroke="#222" stroke-width="1.300" stroke-linejoin="round"/><rect x="3.600" y="3.400" width="12" height="12.600" fill="#fff" stroke="#222" stroke-width="1.300"/><path d="M1 3.500V13.500L3.500 16V3.400z" fill="#2a5db0" stroke="#2a5db0" stroke-width="0.800"/></svg>
<svg class="i" style="left:602px;top:55.2px;" width="10" height="6" viewBox="0 0 10 6"><path d="M0.800 0.800L5 5 9.200 0.800" fill="none" stroke="#222" stroke-width="2"/></svg>
<div class="abs" style="left:618px;top:41.500px;width:31.500px;height:32px;background:#e5e5e5;border:1px solid #d8d8d8;border-radius:3px"></div>
<svg class="i" style="left:625px;top:48.5px;" width="18" height="19" viewBox="0 0 18 19"><path d="M1.500 1v17" stroke="#2a5db0" stroke-width="2"/><path d="M16 1v17" stroke="#222" stroke-width="1.800" stroke-dasharray="3.500 1.500"/><path d="M5 6.500h8M7.500 4.500L5 6.500l2.500 2" fill="none" stroke="#222" stroke-width="1.300"/><path d="M5 12.500h8M10.500 10.500l2.500 2-2.500 2" fill="none" stroke="#2a5db0" stroke-width="1.300"/></svg>
<svg class="i" style="left:663.5px;top:48.5px;" width="17" height="19" viewBox="0 0 17 19"><path d="M1 2.800h3.500M2.200 14.500v3" stroke="#222" stroke-width="0.800" stroke-dasharray="1 1"/><path d="M2.200 17C2.200 8 7 3 16.500 2.800" fill="none" stroke="#222" stroke-width="1.700"/><path d="M11 2.800h5.500" stroke="#2a5db0" stroke-width="1.200"/><path d="M2.200 12v5" stroke="#2a5db0" stroke-width="1.200"/></svg>
<svg class="i" style="left:692px;top:55.2px;" width="10" height="6" viewBox="0 0 10 6"><path d="M0.800 0.800L5 5 9.200 0.800" fill="none" stroke="#222" stroke-width="2"/></svg>
<svg class="i" style="left:716px;top:49.5px;" width="16" height="17" viewBox="0 0 16 17"><g fill="none" stroke="#222" stroke-width="1.900"><circle cx="3" cy="4" r="2.300"/><circle cx="3" cy="13" r="2.300"/><path d="M4.800 5.500L15 14.500M4.800 11.500L15 2.500" stroke-width="2.100"/></g></svg>
<svg class="i" style="left:743.5px;top:55.2px;" width="10" height="6" viewBox="0 0 10 6"><path d="M0.800 0.800L5 5 9.200 0.800" fill="none" stroke="#222" stroke-width="2"/></svg>
<svg class="i" style="left:768px;top:49px;" width="15" height="18" viewBox="0 0 15 18"><path d="M1 16.500V7a5.500 5.500 0 0 1 11 0v1.500h2.500v8" fill="none" stroke="#2a5db0" stroke-width="1.300"/><path d="M4 16.500V7a2.700 2.700 0 0 1 5.400 0v4.300h2.300v5.200" fill="none" stroke="#222" stroke-width="1.500"/></svg>
<svg class="i" style="left:795.5px;top:55.2px;" width="10" height="6" viewBox="0 0 10 6"><path d="M0.800 0.800L5 5 9.200 0.800" fill="none" stroke="#222" stroke-width="2"/></svg>
<svg class="i" style="left:818.5px;top:49px;" width="19" height="18" viewBox="0 0 19 18"><path d="M1.500 1.500h3.500v11.500h3v3.500H1.500z" fill="none" stroke="#222" stroke-width="1.700"/><path d="M9.800 0.500v17.500" stroke="#2a5db0" stroke-width="1" stroke-dasharray="2.500 1.200"/><path d="M18 1.500h-3.500v11.500h-3v3.500H18z" fill="none" stroke="#2a5db0" stroke-width="1.300"/></svg>
<svg class="i" style="left:853.5px;top:49.5px;" width="17" height="17" viewBox="0 0 17 17"><rect x="1" y="1" width="6" height="6" fill="none" stroke="#222" stroke-width="1.600"/><g fill="none" stroke="#2a5db0" stroke-width="1.300"><rect x="10" y="1" width="6" height="6"/><rect x="1" y="10" width="6" height="6"/><rect x="10" y="10" width="6" height="6"/></g></svg>
<svg class="i" style="left:882px;top:55.2px;" width="10" height="6" viewBox="0 0 10 6"><path d="M0.800 0.800L5 5 9.200 0.800" fill="none" stroke="#222" stroke-width="2"/></svg>
<svg class="i" style="left:906px;top:48.5px;" width="17" height="19" viewBox="0 0 17 19"><path d="M1 1h9.500l5 5v12H1z" fill="#fff" stroke="#222" stroke-width="1.300" stroke-linejoin="round"/><path d="M10.500 1v5h5" fill="none" stroke="#222" stroke-width="1.100"/><path d="M4 3.500c3 0 4.500.5 5 3M7 5.500l2.200 1.500 1-2.300" fill="none" stroke="#222" stroke-width="1.300"/><text x="2" y="16" font-size="6.500" font-weight="bold" font-family="Liberation Sans,sans-serif" fill="#222" textLength="12.500" lengthAdjust="spacingAndGlyphs">DXF</text></svg>
<svg class="i" style="left:933.5px;top:55.2px;" width="10" height="6" viewBox="0 0 10 6"><path d="M0.800 0.800L5 5 9.200 0.800" fill="none" stroke="#222" stroke-width="2"/></svg>
<svg class="i" style="left:962px;top:49.5px;" width="17" height="17" viewBox="0 0 17 17"><path d="M3 14L13.500 3.500" stroke="#222" stroke-width="1.700"/><path d="M9 3h5v5" fill="none" stroke="#222" stroke-width="1.300"/><path d="M2.500 9.500v5.500h5.500" fill="none" stroke="#222" stroke-width="1.300"/><path d="M11 1.500l4.500 4.500M1.500 9l3.500 7" stroke="#444" stroke-width="0.800"/></svg>
<svg class="i" style="left:998.5px;top:48.5px;" width="18" height="19" viewBox="0 0 18 19"><path d="M1 16L16 2" stroke="#2a5db0" stroke-width="1.200"/><path d="M8.500 8.500L16.500 17" stroke="#222" stroke-width="2"/><circle cx="8.500" cy="8.800" r="1.900" fill="#222"/></svg>
<svg class="i" style="left:1033.5px;top:49.5px;" width="17" height="17" viewBox="0 0 17 17"><circle cx="8.500" cy="8.500" r="7.700" fill="none" stroke="#2a5db0" stroke-width="1.200"/><circle cx="8.500" cy="8.500" r="4.300" fill="none" stroke="#222" stroke-width="2"/></svg>
<svg class="i" style="left:1067.5px;top:49px;" width="17" height="18" viewBox="0 0 17 18"><path d="M1 5.500L12 16.500" stroke="#222" stroke-width="2.200"/><path d="M5.500 1.500L16 12" stroke="#2a5db0" stroke-width="1.200"/></svg>
<svg class="i" style="left:1102px;top:49px;" width="17" height="18" viewBox="0 0 17 18"><path d="M1 15.500L15.500 1.500" stroke="#222" stroke-width="2.200"/><circle cx="12" cy="12" r="4.300" fill="none" stroke="#2a5db0" stroke-width="1.200"/></svg>
<svg class="i" style="left:1135.5px;top:56.4px;" width="17" height="2.2" viewBox="0 0 17 2.2"><rect width="17" height="2.200" fill="#222"/></svg>
<svg class="i" style="left:1176.4px;top:50px;" width="2.2" height="15.5" viewBox="0 0 2.2 15.5"><rect width="2.200" height="15.500" fill="#222"/></svg>
<svg class="i" style="left:1203px;top:49px;" width="18" height="18" viewBox="0 0 18 18"><path d="M0 15.500h17.500" stroke="#222" stroke-width="2"/><path d="M8.500 2v13.500M8.500 9.500h5v6" fill="none" stroke="#2a5db0" stroke-width="1.200"/></svg>
<svg class="i" style="left:1240.5px;top:54px;" width="10.5" height="8" viewBox="0 0 10.5 8"><path d="M0 1.200h10.500M0 6.500h10.500" stroke="#222" stroke-width="2.100"/></svg>
<svg class="i" style="left:1271px;top:53px;" width="18" height="9" viewBox="0 0 18 9"><path d="M0 4.500h18" stroke="#2a5db0" stroke-width="1.200" stroke-dasharray="4.500 2"/><circle cx="9" cy="4.500" r="2.300" fill="#222"/></svg>
<svg class="i" style="left:1305.5px;top:48.5px;" width="16" height="19" viewBox="0 0 16 19"><path d="M0.500 5.500C5 5.500 8.500 7.500 10.500 17.500" fill="none" stroke="#2a5db0" stroke-width="1.200"/><path d="M8 9.500L15.500 2" stroke="#222" stroke-width="2.100"/></svg>
<svg class="i" style="left:1339px;top:48.5px;" width="17" height="19" viewBox="0 0 17 19"><path d="M1 1C2 9 6 15 16.500 16" fill="none" stroke="#2a5db0" stroke-width="1.200"/><path d="M7.500 13C11 10 12 4 16 1.500" fill="none" stroke="#222" stroke-width="2"/><circle cx="7" cy="13" r="2" fill="#222"/></svg>
<svg class="i" style="left:1373px;top:48.5px;" width="18" height="19" viewBox="0 0 18 19"><path d="M7 3H1.500L5.500 9.500 1.500 16H7" fill="none" stroke="#222" stroke-width="1.900"/><path d="M11 3h5.500L12.500 9.500 16.500 16H11" fill="none" stroke="#2a5db0" stroke-width="1.200"/><path d="M9 1v17" stroke="#222" stroke-width="1" stroke-dasharray="2.500 1.200"/></svg>
<svg class="i" style="left:1407.5px;top:55.5px;" width="17" height="5.5" viewBox="0 0 17 5.5"><path d="M0 1h17" stroke="#2a5db0" stroke-width="2"/><path d="M3 2L1 5.500M6.500 2l-2 3.500M10 2L8 5.500M13.500 2l-2 3.500M16.500 2.500l-1.500 3" stroke="#222" stroke-width="0.900"/></svg>
<svg class="i" style="left:1440px;top:49px;" width="19" height="17" viewBox="0 0 19 17"><path d="M2.500 16C3 8 6 5.500 9.500 5.500S16 8 16.500 16" fill="none" stroke="#222" stroke-width="2"/><path d="M2.500 16C3 8 6 5.500 9.500 5.500" fill="none" stroke="#2a5db0" stroke-width="2"/><path d="M1 12l-1-.5M2 8.500L.500 7.500M4 5.500L2.800 3.800M6.500 4l-.5-2.500M9.500 3.500V0.500M12.500 4l.5-2.500M15 5.500l1.200-1.700M17 8.500l1.500-1M18 12l1-.5" stroke="#555" stroke-width="0.800"/></svg>
<div class="abs" style="left:1478px;top:42px;width:161px;height:32px;background:#ededed;border-radius:4px"></div>
<span class="t" style="left:1487.45px;top:50.00px;font-size:15.5px;color:#333;transform:scaleX(0.8863);">Search tools...</span>
<div class="abs" style="left:1578px;top:49.500px;width:33px;height:18.500px;background:#f4f4f4;border:1px solid #aaa;border-radius:2.500px;box-shadow:0 1px 0 #bbb"></div>
<span class="t" style="left:1581.24px;top:53.00px;font-size:12px;color:#333;transform:scaleX(0.9615);">alt/</span>
<span class="t" style="left:1596.800px;top:52px;font-size:13px;color:#333;font-family:'DejaVu Sans',sans-serif;transform:scaleX(0.8)">⌥</span>
<div class="abs" style="left:1612.500px;top:49.500px;width:15.500px;height:18.500px;background:#f4f4f4;border:1px solid #aaa;border-radius:2.500px;box-shadow:0 1px 0 #bbb"></div>
<span class="t" style="left:1617.09px;top:53.00px;font-size:12px;color:#333;transform:scaleX(1.0606);">c</span>
<!-- part_left -->
<div id="fpanel"></div>
<svg class="i" style="left:13px;top:84px;" width="17" height="18" viewBox="0 0 17 18"><circle cx="3.500" cy="8.500" r="3" fill="#222"/><path d="M3.500 0v4.500M3.500 12.500v5.500" stroke="#222" stroke-width="1.600" stroke-dasharray="1.700 1.400"/><path d="M12.500 9.500v8M8.500 13.500h8" stroke="#1b5cb8" stroke-width="2.100"/></svg>
<svg class="i" style="left:10.5px;top:119.5px;" width="20" height="17" viewBox="0 0 20 17"><ellipse cx="10" cy="7" rx="9.700" ry="6.800" fill="#2b2b2b"/><path d="M4 11.500L1.500 16.500 9 13z" fill="#2b2b2b"/></svg>
<svg class="i" style="left:11.5px;top:154px;" width="18" height="18" viewBox="0 0 18 18"><path d="M13.500 9.500V15.500a1.500 1.500 0 0 1-1.500 1.500H2.500A1.500 1.500 0 0 1 1 15.500V2.500A1.500 1.500 0 0 1 2.500 1H12a1.500 1.500 0 0 1 1.500 1.500v1" fill="none" stroke="#2b2b2b" stroke-width="1.900"/><path d="M4 5h7M4 8.500h5M4 12h2.500" stroke="#2b2b2b" stroke-width="1.500"/><path d="M8 14l1-3.500 6-6.500 2.300 2.300-6 6.500z" fill="#2b2b2b"/></svg>
<svg class="i" style="left:11px;top:189px;" width="18" height="19" viewBox="0 0 18 19"><circle cx="10.500" cy="11" r="6.500" fill="none" stroke="#2b2b2b" stroke-width="1.900"/><path d="M8 1.200h5M10.500 1.500v3M10.500 11l3-3.500" stroke="#2b2b2b" stroke-width="1.700" fill="none"/><path d="M0.500 8.500h4M0 11h3.500M1 13.500h3" stroke="#2b2b2b" stroke-width="1.200"/></svg>
<svg class="i" style="left:10px;top:222.5px;" width="20" height="21" viewBox="0 0 20 21"><circle cx="9.800" cy="10" r="9.800" fill="#2b2b2b"/><path d="M14 16.500L19.500 20l-1.500-6z" fill="#2b2b2b"/><path d="M9.800 4L15 7v6l-5.200 3-5.200-3V7z" fill="none" stroke="#f9f9f9" stroke-width="1.600" stroke-linejoin="round"/><path d="M9.800 7.500l2.300 1.300v2.600l-2.300 1.300-2.300-1.300V8.800z" fill="none" stroke="#f9f9f9" stroke-width="1.100"/></svg>
<div class="abs" style="left:0;top:251px;width:39px;height:1px;background:#ccc"></div>
<svg class="i" style="left:11.5px;top:259.5px;" width="17" height="19" viewBox="0 0 17 19"><rect x="1" y="1" width="15" height="17" rx="1.800" fill="none" stroke="#2b2b2b" stroke-width="1.900"/><path d="M3.500 5.200l1.100 1.100 1.900-2.300M3.500 9.500l1.100 1.100 1.900-2.300M3.500 13.800l1.100 1.100 1.900-2.300" fill="none" stroke="#2b2b2b" stroke-width="1.100"/><path d="M8.500 5.500h5.500M8.500 9.800h5.500M8.500 14h5.500" stroke="#2b2b2b" stroke-width="1.900"/></svg>
<svg class="i" style="left:11px;top:1058.5px;" width="19" height="16" viewBox="0 0 19 16"><path d="M0.500 0.800H17.500V5.500C14 3 9.500 4.500 9 8.300H0.500z" fill="#2b2b2b"/><circle cx="12.500" cy="8.800" r="3.700" fill="#f9f9f9" stroke="#2b2b2b" stroke-width="1.800"/><path d="M15.200 11.600L18.300 15" stroke="#2b2b2b" stroke-width="2.300"/></svg>
<svg class="i" style="left:50.5px;top:93px;" width="16" height="16" viewBox="0 0 16 16"><path d="M1 1h14L9.500 7.500v7L6.500 12.500v-5z" fill="none" stroke="#222" stroke-width="1.400" stroke-linejoin="round"/></svg>
<div class="abs" style="left:79px;top:84px;width:158px;height:30px;border:1px solid #8f8f8f;border-radius:4px;background:#fff"></div>
<span class="t" style="left:85.62px;top:94.00px;font-size:13.5px;color:#7a7a7a;transform:scaleX(0.9491);font-style:italic;">Filter by name or type</span>
<span class="t" style="left:43.23px;top:123.00px;font-size:14px;color:#222;transform:scaleX(0.9577);-webkit-text-stroke:0.350px #222;">Features (21)</span>
<svg class="i" style="left:146px;top:123px;" width="18" height="14" viewBox="0 0 18 14"><path d="M0.800 5V1h5l1.500 1.700h10V13H7" fill="#fff" stroke="#b5b5b5" stroke-width="1.100" stroke-linejoin="round"/><path d="M0.800 6.500v5M0.800 13H4" stroke="#b5b5b5" stroke-width="1" stroke-dasharray="1.500 1"/><path d="M5 5.500v7M1.500 9h7" stroke="#5b78d0" stroke-width="1.600"/></svg>
<svg class="i" style="left:179px;top:123px;" width="12" height="14" viewBox="0 0 12 14"><path d="M0 0h3.800v14H0zM8 0h3.800v14H8z" fill="#9a9a9a"/></svg>
<svg class="i" style="left:207px;top:121px;" width="16" height="18" viewBox="0 0 16 18"><circle cx="8" cy="10.500" r="6.500" fill="none" stroke="#222" stroke-width="1.900"/><path d="M5.500 1h5M8 1v3M13 4.500l1.500-1.500M8 10.500l3 3.500" stroke="#222" stroke-width="1.700" fill="none"/></svg>
<div class="abs" style="left:49px;top:171px;width:1px;height:102px;background:#c9c9c9"></div><div class="abs" style="left:45px;top:273px;width:9px;height:1px;background:#c9c9c9"></div>
<div class="abs" style="left:49px;top:352px;width:1px;height:156px;background:#c9c9c9"></div><div class="abs" style="left:45px;top:507px;width:9px;height:1px;background:#c9c9c9"></div>
<div class="abs" style="left:49px;top:561px;width:1px;height:130px;background:#c9c9c9"></div><div class="abs" style="left:45px;top:690px;width:9px;height:1px;background:#c9c9c9"></div>
<div class="rowbg" style="top:301px;height:24px;background:#eaeff3;border-bottom:1.500px solid #9ccbe8"></div>
<div class="rowbg" style="top:326.500px;height:24.500px;background:#eaeff3;border-bottom:1.500px solid #9ccbe8"></div>
<div class="rowbg" style="top:353px;height:24px;background:#aad6f0"></div>
<svg class="i" style="left:44.3px;top:153.3px;" width="12" height="8" viewBox="0 0 12 8"><path d="M1 1.200L6 6.200 11 1.200" fill="none" stroke="#333" stroke-width="2"/></svg>
<span class="t" style="left:62.32px;top:151.00px;font-size:13.8px;color:#222;transform:scaleX(0.9758);">Default geometry</span>
<svg class="i" style="left:68.5px;top:179px;" width="8" height="8" viewBox="0 0 8 8"><circle cx="4" cy="4" r="3.300" fill="#fff" stroke="#444" stroke-width="0.900"/><circle cx="4" cy="4" r="1.400" fill="#666"/></svg>
<span class="t" style="left:84.77px;top:177.00px;font-size:13.8px;color:#222;transform:scaleX(0.9558);">Origin</span>
<svg class="i" style="left:65px;top:200.7px;" width="15" height="15" viewBox="0 0 15 15"><path d="M0.700 0.700L14.300 3v11.300L0.700 12z" fill="#ececec" stroke="#a8a8a8" stroke-width="1.100" stroke-linejoin="round"/><path d="M7.200 1.800v5.700l7.100 1.200" fill="none" stroke="#a8a8a8" stroke-width="1.100"/></svg>
<span class="t" style="left:85.02px;top:203.00px;font-size:13.8px;color:#9c9c9c;transform:scaleX(0.9987);">Top</span>
<svg class="i" style="left:65px;top:226.7px;" width="15" height="15" viewBox="0 0 15 15"><path d="M0.700 0.700L14.300 3v11.300L0.700 12z" fill="#ececec" stroke="#a8a8a8" stroke-width="1.100" stroke-linejoin="round"/><path d="M7.200 1.800v5.700l7.100 1.200" fill="none" stroke="#a8a8a8" stroke-width="1.100"/></svg>
<span class="t" style="left:84.19px;top:229.00px;font-size:13.8px;color:#9c9c9c;transform:scaleX(1.0036);">Front</span>
<svg class="i" style="left:65px;top:252.7px;" width="15" height="15" viewBox="0 0 15 15"><path d="M0.700 0.700L14.300 3v11.300L0.700 12z" fill="#ececec" stroke="#a8a8a8" stroke-width="1.100" stroke-linejoin="round"/><path d="M7.200 1.800v5.700l7.100 1.200" fill="none" stroke="#a8a8a8" stroke-width="1.100"/></svg>
<span class="t" style="left:84.22px;top:255.00px;font-size:13.8px;color:#9c9c9c;transform:scaleX(0.9747);">Right</span>
<svg class="i" style="left:46.4px;top:280.5px;" width="7" height="13" viewBox="0 0 7 13"><path d="M1 1L6 6.500 1 12" fill="none" stroke="#333" stroke-width="1.700"/></svg>
<svg class="i" style="left:66px;top:278.5px;" width="15" height="15" viewBox="0 0 15 15"><g fill="#f2f2f2" stroke="#555" stroke-width="1.100" stroke-linejoin="round"><path d="M7.500 0.700L14.300 4v7.300L7.500 14.500 0.700 11.300V4z"/><path d="M0.700 4L7.500 7.300 14.300 4M7.500 7.300v7.200" fill="none"/></g></svg>
<span class="t" style="left:85.89px;top:281.00px;font-size:13.8px;color:#222;transform:scaleX(0.9313);">Origin Cube</span>
<svg class="i" style="left:196.5px;top:276.5px;" width="7" height="19" viewBox="0 0 7 19"><circle cx="3.500" cy="9.500" r="2.900" fill="#222"/><path d="M3.500 0v5M3.500 14v5" stroke="#222" stroke-width="1.600" stroke-dasharray="1.700 1.500"/></svg>
<svg class="i" style="left:46px;top:304.7px;" width="15" height="15" viewBox="0 0 15 15"><path d="M2 11.500L10.500 1.800l2.600 2.300L4.600 13.800 1.500 14.500z" fill="none" stroke="#555" stroke-width="1.100" stroke-linejoin="round"/><path d="M0.300 14.600h14.500" stroke="#6a7fc0" stroke-width="1"/></svg>
<span class="t" style="left:65.33px;top:307.00px;font-size:13.8px;color:#222;transform:scaleX(0.9654);">Layout Sketch</span>
<svg class="i" style="left:44.3px;top:335px;" width="12" height="8" viewBox="0 0 12 8"><path d="M1 1.200L6 6.200 11 1.200" fill="none" stroke="#333" stroke-width="2"/></svg>
<svg class="i" style="left:65.5px;top:331.7px;" width="16" height="13" viewBox="0 0 16 13"><path d="M0.800 1h4.600l1.400 1.600h8.400v9.600H0.800z" fill="#fff" stroke="#444" stroke-width="1.200" stroke-linejoin="round"/></svg>
<span class="t" style="left:85.34px;top:333.00px;font-size:13.8px;color:#222;transform:scaleX(0.9586);">Plates (6)</span>
<svg class="i" style="left:65px;top:356.7px;" width="15" height="15" viewBox="0 0 15 15"><path d="M2 11.500L10.500 1.800l2.600 2.300L4.600 13.800 1.500 14.500z" fill="none" stroke="#6f9fc0" stroke-width="1.100" stroke-linejoin="round"/><path d="M0.300 14.600h14.500" stroke="#7f9fd8" stroke-width="1"/></svg>
<span class="t" style="left:84.50px;top:359.00px;font-size:13.5px;color:#54809f;transform:scaleX(0.9847);font-weight:bold;">Plate Sketch</span>
<svg class="i" style="left:65px;top:382.7px;" width="15" height="15" viewBox="0 0 15 15"><g stroke="#a8a8a8" stroke-width="1" stroke-linejoin="round"><path d="M0.600 2L2 0.600h11.500l1 1v12.500H2L0.600 12.800z" fill="#fff"/><path d="M2 2h12.500M2 2v12" fill="none"/><path d="M5 6.500l1.200-1.300h8v8l-1 1H5z" fill="#b5b5b5"/></g></svg>
<span class="t" style="left:85.60px;top:385.00px;font-size:13.8px;color:#9c9c9c;transform:scaleX(0.9637);font-style:italic;">Plate Extrude</span>
<svg class="i" style="left:65px;top:408.7px;" width="15" height="15" viewBox="0 0 15 15"><g stroke="#a8a8a8" stroke-width="1" stroke-linejoin="round"><path d="M0.600 1.500l1-1h3l1 1v9l1.500 1.200v2.500H2l-1.400-1.400z" fill="#fff"/><path d="M8 1.500l1-1h4.400l1 1v12.700H8z" fill="#bbb"/><path d="M7 0v15" stroke-dasharray="2 1" fill="none"/></g></svg>
<span class="t" style="left:85.60px;top:411.00px;font-size:13.8px;color:#9c9c9c;transform:scaleX(0.9769);font-style:italic;">Plate Mirror</span>
<svg class="i" style="left:65px;top:434.7px;" width="15" height="15" viewBox="0 0 15 15"><path d="M2 11.500L10.500 1.800l2.600 2.300L4.600 13.800 1.500 14.500z" fill="none" stroke="#aaa" stroke-width="1.100" stroke-linejoin="round"/><path d="M0.300 14.600h14.500" stroke="#a9b3dc" stroke-width="1"/></svg>
<span class="t" style="left:85.34px;top:437.00px;font-size:13.8px;color:#9c9c9c;transform:scaleX(0.9613);font-style:italic;">Cutout</span>
<svg class="i" style="left:65px;top:460.7px;" width="15" height="15" viewBox="0 0 15 15"><g stroke="#a8a8a8" stroke-width="1" stroke-linejoin="round"><path d="M0.600 2L2 0.600h11.500l1 1v12.500H2L0.600 12.800z" fill="#fff"/><path d="M2 2h12.500M2 2v12" fill="none"/><path d="M5 6.500l1.200-1.300h8v8l-1 1H5z" fill="#b5b5b5"/></g></svg>
<span class="t" style="left:85.33px;top:463.00px;font-size:13.8px;color:#9c9c9c;transform:scaleX(0.9691);font-style:italic;">Cutout Extrude</span>
<svg class="i" style="left:65px;top:486.7px;" width="15" height="15" viewBox="0 0 15 15"><g stroke="#a8a8a8" stroke-width="1" stroke-linejoin="round"><path d="M0.600 6C0.600 2.500 3 0.600 6.500 0.600h7l1 1v12.600H2L0.600 12.800z" fill="#fff"/><path d="M2 14.200V7C2 4 4 2 7.500 2h7" fill="none"/><path d="M0.800 5C1.200 2.500 3.500 0.800 6 0.800L7 2C4.500 2 2.500 3.500 2 6z" fill="#bbb"/></g></svg>
<span class="t" style="left:85.32px;top:489.00px;font-size:13.8px;color:#9c9c9c;transform:scaleX(0.9830);font-style:italic;">Cutout Fillet</span>
<svg class="i" style="left:45px;top:512.5px;" width="17" height="15" viewBox="0 0 17 15"><g><path d="M1 6.500L15.500 5l1 8.500-14.500 1z" fill="#8d8d8d"/><circle cx="5.500" cy="9.500" r="2.200" fill="#fff" stroke="#777" stroke-width="0.700"/><circle cx="11.500" cy="9" r="2.200" fill="#fff" stroke="#777" stroke-width="0.700"/><circle cx="5.800" cy="9.700" r="0.900" fill="#777"/><circle cx="11.800" cy="9.200" r="0.900" fill="#777"/><path d="M8 5.500V1.500" stroke="#888" stroke-width="1.300"/><path d="M4 1h2.500M9.500 1H12M4 3h2M10 3h2" stroke="#aaa" stroke-width="0.900"/></g></svg>
<span class="t" style="left:66.60px;top:515.00px;font-size:13.8px;color:#9c9c9c;transform:scaleX(0.9583);font-style:italic;">Bolt Spacer</span>
<svg class="i" style="left:196.5px;top:510.5px;" width="7" height="19" viewBox="0 0 7 19"><circle cx="3.500" cy="9.500" r="2.900" fill="#222"/><path d="M3.500 0v5M3.500 14v5" stroke="#222" stroke-width="1.600" stroke-dasharray="1.700 1.500"/></svg>
<svg class="i" style="left:44.3px;top:543px;" width="12" height="8" viewBox="0 0 12 8"><path d="M1 1.200L6 6.200 11 1.200" fill="none" stroke="#333" stroke-width="2"/></svg>
<svg class="i" style="left:65.5px;top:539.7px;" width="16" height="13" viewBox="0 0 16 13"><path d="M0.800 1h4.600l1.400 1.600h8.400v9.600H0.800z" fill="#fff" stroke="#444" stroke-width="1.200" stroke-linejoin="round"/></svg>
<span class="t" style="left:85.35px;top:541.00px;font-size:13.8px;color:#222;transform:scaleX(0.9472);">Power (5)</span>
<svg class="i" style="left:66px;top:564.7px;" width="15" height="15" viewBox="0 0 15 15"><g fill="none" stroke="#bdbdbd" stroke-width="1"><circle cx="4.500" cy="4.500" r="3.700"/><circle cx="11.500" cy="11.500" r="2.400"/><path d="M7.300 2L13.500 10M2 7.300L10 13.500"/></g></svg>
<span class="t" style="left:85.59px;top:567.00px;font-size:13.8px;color:#9c9c9c;transform:scaleX(0.9831);font-style:italic;">Motor Belt</span>
<svg class="i" style="left:196.5px;top:562.5px;" width="7" height="19" viewBox="0 0 7 19"><circle cx="3.500" cy="9.500" r="2.900" fill="#222"/><path d="M3.500 0v5M3.500 14v5" stroke="#222" stroke-width="1.600" stroke-dasharray="1.700 1.500"/></svg>
<svg class="i" style="left:66px;top:590.7px;" width="15" height="15" viewBox="0 0 15 15"><g fill="none" stroke="#bdbdbd" stroke-width="1"><circle cx="4.500" cy="4.500" r="3.700"/><circle cx="11.500" cy="11.500" r="2.400"/><path d="M7.300 2L13.500 10M2 7.300L10 13.500"/></g></svg>
<span class="t" style="left:85.33px;top:593.00px;font-size:13.8px;color:#9c9c9c;transform:scaleX(0.9672);font-style:italic;">Output Belt</span>
<svg class="i" style="left:196.5px;top:588.5px;" width="7" height="19" viewBox="0 0 7 19"><circle cx="3.500" cy="9.500" r="2.900" fill="#222"/><path d="M3.500 0v5M3.500 14v5" stroke="#222" stroke-width="1.600" stroke-dasharray="1.700 1.500"/></svg>
<svg class="i" style="left:64.5px;top:616.5px;" width="17" height="15" viewBox="0 0 17 15"><g><path d="M1 6.500L15.500 5l1 8.500-14.500 1z" fill="#8d8d8d"/><circle cx="5.500" cy="9.500" r="2.200" fill="#fff" stroke="#777" stroke-width="0.700"/><circle cx="11.500" cy="9" r="2.200" fill="#fff" stroke="#777" stroke-width="0.700"/><circle cx="5.800" cy="9.700" r="0.900" fill="#777"/><circle cx="11.800" cy="9.200" r="0.900" fill="#777"/><path d="M8 5.500V1.500" stroke="#888" stroke-width="1.300"/><path d="M4 1h2.500M9.500 1H12M4 3h2M10 3h2" stroke="#aaa" stroke-width="0.900"/></g></svg>
<span class="t" style="left:85.73px;top:619.00px;font-size:13.8px;color:#9c9c9c;transform:scaleX(0.9630);font-style:italic;">Shaft 1</span>
<svg class="i" style="left:196.5px;top:614.5px;" width="7" height="19" viewBox="0 0 7 19"><circle cx="3.500" cy="9.500" r="2.900" fill="#222"/><path d="M3.500 0v5M3.500 14v5" stroke="#222" stroke-width="1.600" stroke-dasharray="1.700 1.500"/></svg>
<svg class="i" style="left:64.5px;top:642.5px;" width="17" height="15" viewBox="0 0 17 15"><g><path d="M1 6.500L15.500 5l1 8.500-14.500 1z" fill="#8d8d8d"/><circle cx="5.500" cy="9.500" r="2.200" fill="#fff" stroke="#777" stroke-width="0.700"/><circle cx="11.500" cy="9" r="2.200" fill="#fff" stroke="#777" stroke-width="0.700"/><circle cx="5.800" cy="9.700" r="0.900" fill="#777"/><circle cx="11.800" cy="9.200" r="0.900" fill="#777"/><path d="M8 5.500V1.500" stroke="#888" stroke-width="1.300"/><path d="M4 1h2.500M9.500 1H12M4 3h2M10 3h2" stroke="#aaa" stroke-width="0.900"/></g></svg>
<span class="t" style="left:85.74px;top:645.00px;font-size:13.8px;color:#9c9c9c;transform:scaleX(0.9600);font-style:italic;">Shaft 2</span>
<svg class="i" style="left:196.5px;top:640.5px;" width="7" height="19" viewBox="0 0 7 19"><circle cx="3.500" cy="9.500" r="2.900" fill="#222"/><path d="M3.500 0v5M3.500 14v5" stroke="#222" stroke-width="1.600" stroke-dasharray="1.700 1.500"/></svg>
<svg class="i" style="left:64.5px;top:668.5px;" width="17" height="15" viewBox="0 0 17 15"><g><path d="M1 6.500L15.500 5l1 8.500-14.500 1z" fill="#8d8d8d"/><circle cx="5.500" cy="9.500" r="2.200" fill="#fff" stroke="#777" stroke-width="0.700"/><circle cx="11.500" cy="9" r="2.200" fill="#fff" stroke="#777" stroke-width="0.700"/><circle cx="5.800" cy="9.700" r="0.900" fill="#777"/><circle cx="11.800" cy="9.200" r="0.900" fill="#777"/><path d="M8 5.500V1.500" stroke="#888" stroke-width="1.300"/><path d="M4 1h2.500M9.500 1H12M4 3h2M10 3h2" stroke="#aaa" stroke-width="0.900"/></g></svg>
<span class="t" style="left:85.34px;top:671.00px;font-size:13.8px;color:#9c9c9c;transform:scaleX(0.9559);font-style:italic;">Output Shaft</span>
<svg class="i" style="left:196.5px;top:666.5px;" width="7" height="19" viewBox="0 0 7 19"><circle cx="3.500" cy="9.500" r="2.900" fill="#222"/><path d="M3.500 0v5M3.500 14v5" stroke="#222" stroke-width="1.600" stroke-dasharray="1.700 1.500"/></svg>
<div class="abs" style="left:40px;top:692px;width:200px;height:11px;overflow:hidden"><svg class="i" style="left:4.3px;top:7px;" width="12" height="8" viewBox="0 0 12 8"><path d="M1 1.200L6 6.200 11 1.200" fill="none" stroke="#333" stroke-width="2"/></svg><svg class="i" style="left:25.5px;top:4.5px;" width="16" height="13" viewBox="0 0 16 13"><path d="M0.800 1h4.600l1.400 1.600h8.400v9.600H0.800z" fill="#fff" stroke="#444" stroke-width="1.200" stroke-linejoin="round"/></svg><span class="t" style="left:45.35px;top:5.00px;font-size:13.8px;color:#222;transform:scaleX(0.9511);">Pocketing (3)</span></div>
<div class="abs" style="left:40px;top:703px;width:200px;height:1px;background:#cfcfcf"></div>
<svg class="i" style="left:44px;top:713.5px;" width="12" height="8" viewBox="0 0 12 8"><path d="M1 1.200L6 6.200 11 1.200" fill="none" stroke="#333" stroke-width="2"/></svg>
<span class="t" style="left:62.36px;top:711.00px;font-size:13.8px;color:#222;transform:scaleX(0.9459);">Parts (1)</span>
<svg class="i" style="left:64.5px;top:733.7px;" width="16" height="16" viewBox="0 0 16 16"><g fill="#fff" stroke="#555" stroke-width="1.100" stroke-linejoin="round"><path d="M1 9.500l2.500-2h4V2.500L10 1h4.500v11.500L12 15H1z"/><path d="M1 9.500h6.500V3h4.500v12M12 3l2.500-2M7.500 9.500L10 7.500" fill="none"/></g></svg>
<span class="t" style="left:84.89px;top:737.00px;font-size:13.8px;color:#222;transform:scaleX(0.9258);">Origin Cube</span>
<div class="abs" style="left:245px;top:537.800px;width:33px;height:34px;background:#fff;border:1px solid #909090;border-left:none"></div>
<svg class="i" style="left:250px;top:545px;" width="22" height="22" viewBox="0 0 22 22"><path d="M2.200 2.300L5 5.200 7.800 2.300" fill="none" stroke="#444" stroke-width="1.500"/><path d="M5 7.200V19.800" stroke="#8a8a8a" stroke-width="2"/><path d="M10.100 3.400H20M7.100 8.500H20M7.100 13.400H20M7.100 18.500H20" stroke="#333" stroke-width="1.300"/></svg>
<!-- part_dialogs -->
<div class="dlg" style="left:258px;top:80px;width:220px;height:219px"></div>
<div class="dlg" style="left:478px;top:80px;width:220px;height:324.500px"></div>
<div class="abs" style="left:258px;top:80px;width:440px;height:27px;background:#fff"></div>
<div class="abs" style="left:477.500px;top:108px;width:1px;height:191px;background:#e2e2e2"></div>
<div class="hl" style="left:258px;top:107px;width:440px;background:#d6d6d6"></div>
<span class="t" style="left:263.33px;top:86.00px;font-size:14px;color:#222;transform:scaleX(0.9593);-webkit-text-stroke:0.350px #222;">Plate Sketch</span>
<div class="abs" style="left:422px;top:79px;width:28px;height:28px;background:#0d8f12"></div>
<svg class="i" style="left:427.5px;top:86px;" width="17" height="14" viewBox="0 0 17 14"><path d="M1.500 7.500l4.700 4.500L15.500 2" fill="none" stroke="#fff" stroke-width="3"/></svg>
<svg class="i" style="left:457.5px;top:88px;" width="12" height="11.5" viewBox="0 0 12 11.5"><path d="M1.500 1.500l9 8.500M10.500 1.500l-9 8.500" stroke="#c4202c" stroke-width="3.100"/></svg>
<div class="abs" style="left:261px;top:113px;width:187px;height:43.500px;border:1px solid #cfcfcf;border-radius:1px"></div>
<span class="t" style="left:266.59px;top:120.00px;font-size:10.2px;color:#555;transform:scaleX(0.9958);">Sketch plane</span>
<span class="t" style="left:267.69px;top:140.00px;font-size:12.8px;color:#444;transform:scaleX(1.0513);font-weight:bold;">Mate connector</span>
<svg class="i" style="left:408px;top:139px;" width="14.5" height="14.5" viewBox="0 0 14.5 14.5"><circle cx="7.25" cy="7.25" r="6.55" fill="none" stroke="#444" stroke-width="1"/><circle cx="7.25" cy="7.25" r="4.55" fill="none" stroke="#444" stroke-width="0.9"/><path d="M7.25 2.7V7.25H11.8" fill="none" stroke="#444" stroke-width="1"/></svg>
<svg class="i" style="left:428.7px;top:141.5px;" width="8.5" height="8" viewBox="0 0 8.5 8"><path d="M0.700 0.700l7 6.600M7.700 0.700l-7 6.600" stroke="#444" stroke-width="1.100"/></svg>
<svg class="i" style="left:452.7px;top:116.5px;" width="18.5" height="18.5" viewBox="0 0 18.5 18.5"><circle cx="9.25" cy="9.25" r="8.55" fill="none" stroke="#333" stroke-width="1.3"/><circle cx="9.25" cy="9.25" r="6.55" fill="none" stroke="#333" stroke-width="1.1700000000000002"/><path d="M9.25 2.7V9.25H15.8" fill="none" stroke="#333" stroke-width="1.3"/></svg>
<div class="cb" style="left:262.200px;top:170.3px"></div>
<span class="t" style="left:278.12px;top:170.00px;font-size:13.5px;color:#555;transform:scaleX(0.9978);">Disable imprinting</span>
<div class="cb" style="left:262.200px;top:197.2px"></div>
<span class="t" style="left:277.97px;top:197.00px;font-size:13.5px;color:#555;transform:scaleX(0.9844);">Show constraints</span>
<div class="cb" style="left:262.200px;top:225.3px"></div>
<span class="t" style="left:277.98px;top:225.00px;font-size:13.5px;color:#555;transform:scaleX(0.9628);">Show expressions</span>
<div class="cbc" style="left:262.2px;top:252.2px"></div><svg class="i" style="left:262.2px;top:252.2px;" width="11.5" height="11.5" viewBox="0 0 11.5 11.5"><path d="M2.500 6l2.300 2.300 4.300-4.800" fill="none" stroke="#fff" stroke-width="1.900"/></svg>
<span class="t" style="left:277.97px;top:252.00px;font-size:13.5px;color:#555;transform:scaleX(0.9816);">Show errors</span>
<div class="btn" style="left:377px;top:274px;width:22px;height:22px"></div>
<svg class="i" style="left:379.5px;top:276.5px;" width="18" height="18" viewBox="0 0 18 18"><circle cx="8.400" cy="8.400" r="8.200" fill="none" stroke="#222" stroke-width="1.300"/><path d="M14.300 14.200l2.700 2.400" stroke="#222" stroke-width="2.300"/><path d="M4.300 11.800L5.800 7.800 12 0.900l1.900 1.600-6 7.200z" fill="#fff" stroke="#222" stroke-width="1.100" stroke-linejoin="round"/><path d="M4.300 11.800L5.600 8.300 7.400 9.900z" fill="#222"/><path d="M2.300 13h12.300" stroke="#2a4fb0" stroke-width="1.100"/></svg>
<div class="btn" style="left:403px;top:274px;width:48.500px;height:22px"></div>
<span class="t" style="left:413.37px;top:278.00px;font-size:14px;color:#222;transform:scaleX(0.9219);">Final</span>
<svg class="i" style="left:460.5px;top:281.8px;" width="12.5" height="12.5" viewBox="0 0 12.5 12.5"><circle cx="6.250" cy="6.250" r="6.250" fill="#a9a9a9"/></svg><span class="t" style="left:463.22px;top:283.00px;font-size:10.5px;color:#fff;transform:scaleX(1.1355);font-weight:bold;">?</span>
<span class="t" style="left:483.33px;top:86.00px;font-size:14px;color:#222;transform:scaleX(0.9559);-webkit-text-stroke:0.350px #222;">Mate connector</span>
<svg class="i" style="left:678.5px;top:88px;" width="10.5" height="10.5" viewBox="0 0 10.5 10.5"><path d="M0.500 0.500l9.500 9.500M10 0.500L0.500 10" stroke="#8a8a8a" stroke-width="1.100"/></svg>
<span class="t" style="left:483.85px;top:114.00px;font-size:14.3px;color:#333;transform:scaleX(0.9589);">On entity</span>
<svg class="i" style="left:658px;top:119px;" width="7.6" height="4.3" viewBox="0 0 7.6 4.3"><path d="M0 0h7.600L3.800 4.300z" fill="#222"/></svg>
<div class="hl" style="left:478px;top:133px;width:193.500px"></div>
<div class="abs" style="left:481.300px;top:141px;width:213.300px;height:43.500px;background:#d9ecf8;border:1.500px solid #2a5c9e;border-radius:2.500px"></div>
<span class="t" style="left:486.79px;top:148.00px;font-size:10.2px;color:#444;transform:scaleX(0.9952);">Origin entity</span>
<span class="t" style="left:487.46px;top:167.00px;font-size:13.5px;color:#4a4a4a;transform:scaleX(0.9660);">Edge of Layout Sketch</span>
<svg class="i" style="left:675px;top:169.7px;" width="7.8" height="7.5" viewBox="0 0 7.8 7.5"><path d="M0.600 0.600l6.500 6.200M7.100 0.600L0.600 6.800" stroke="#444" stroke-width="1.100"/></svg>
<div class="cb" style="left:482.200px;top:198.300px"></div>
<span class="t" style="left:497.44px;top:198.00px;font-size:13.5px;color:#555;transform:scaleX(0.9801);">Realign</span>
<div class="cbc" style="left:482.2px;top:225.3px"></div><svg class="i" style="left:482.2px;top:225.3px;" width="11.5" height="11.5" viewBox="0 0 11.5 11.5"><path d="M2.500 6l2.300 2.300 4.300-4.800" fill="none" stroke="#fff" stroke-width="1.900"/></svg>
<span class="t" style="left:497.46px;top:225.00px;font-size:13.5px;color:#555;transform:scaleX(0.9601);">Move</span>
<span class="t" style="left:480.73px;top:251.00px;font-size:15.5px;color:#9a9a9a;transform:scaleX(0.8602);">X</span>
<svg class="i" style="left:492.5px;top:254.3px;" width="9.5" height="9" viewBox="0 0 9.5 9"><path d="M1 1l6.500 6" stroke="#cc2a3c" stroke-width="1.600"/><path d="M9 8.500L3.500 8 8.500 3z" fill="#cc2a3c"/></svg>
<span class="t" style="left:647.09px;top:252.00px;font-size:14.3px;color:#333;transform:scaleX(0.9553);">0 in</span>
<div class="hl" style="left:504px;top:270px;width:167.500px"></div>
<span class="t" style="left:480.73px;top:277.00px;font-size:15.5px;color:#9a9a9a;transform:scaleX(0.8602);">Y</span>
<svg class="i" style="left:492.5px;top:279.8px;" width="9.5" height="9" viewBox="0 0 9.5 9"><path d="M1 8l6.500-6" stroke="#17902a" stroke-width="1.600"/><path d="M9 0.500L8.500 6 3.500 1z" fill="#17902a"/></svg>
<span class="t" style="left:647.09px;top:278.00px;font-size:14.3px;color:#333;transform:scaleX(0.9553);">0 in</span>
<div class="hl" style="left:504px;top:296px;width:167.500px"></div>
<span class="t" style="left:480.01px;top:303.00px;font-size:15.5px;color:#9a9a9a;transform:scaleX(1.0440);">Z</span>
<svg class="i" style="left:492.5px;top:305.5px;" width="8.5" height="11" viewBox="0 0 8.5 11"><path d="M4.250 3v8" stroke="#1b5cb8" stroke-width="1.600"/><path d="M4.250 0L8 4.500H0.500z" fill="#1b5cb8"/></svg>
<span class="t" style="left:636.50px;top:304.00px;font-size:14.3px;color:#333;transform:scaleX(0.9334);">0.5 in</span>
<div class="hl" style="left:504px;top:322px;width:167.500px"></div>
<span class="t" style="left:483.30px;top:329.00px;font-size:14.3px;color:#333;transform:scaleX(0.9586);">Rotate about Z</span>
<svg class="i" style="left:658px;top:333px;" width="7.6" height="4.3" viewBox="0 0 7.6 4.3"><path d="M0 0h7.600L3.800 4.300z" fill="#222"/></svg>
<div class="hl" style="left:478px;top:348px;width:193.500px"></div>
<span class="t" style="left:482.55px;top:359.00px;font-size:12.8px;color:#555;transform:scaleX(0.9318);">Rotation angle</span>
<span class="t" style="left:635.80px;top:359.00px;font-size:14.3px;color:#333;transform:scaleX(0.9305);">0 deg</span>
<div class="hl" style="left:564px;top:375.500px;width:107.500px"></div>
<svg class="i" style="left:482px;top:380px;" width="18.5" height="19" viewBox="0 0 18.5 19"><path d="M17.500 0.500L6.500 11.500" stroke="#222" stroke-width="2.600"/><path d="M0.500 18.500L4 8.500l6.500 6.500z" fill="#222"/><path d="M0.800 7l5-5" stroke="#aaa" stroke-width="1"/><path d="M6.500 1.500L4 2.200l1.700 1.700z" fill="#aaa"/></svg>
<svg class="i" style="left:507px;top:380px;" width="20" height="19" viewBox="0 0 20 19"><circle cx="10" cy="10" r="8" fill="none" stroke="#222" stroke-width="0.900"/><path d="M3 6.500A8 8 0 0 1 17.500 7" fill="none" stroke="#222" stroke-width="2"/><path d="M1.500 8.500L3 3.500 6.500 7z" fill="#222"/><g fill="#fff" stroke="#555" stroke-width="0.700"><circle cx="10" cy="2" r="1.600"/><circle cx="10" cy="18" r="1.600"/><rect x="0.400" y="8.400" width="3.200" height="3.200" transform="rotate(45 2 10)"/><rect x="16.400" y="8.400" width="3.200" height="3.200" transform="rotate(45 18 10)"/></g></svg>
<svg class="i" style="left:680.5px;top:387.5px;" width="12.5" height="12.5" viewBox="0 0 12.5 12.5"><circle cx="6.250" cy="6.250" r="6.250" fill="#a9a9a9"/></svg><span class="t" style="left:683.22px;top:389.00px;font-size:10.5px;color:#fff;transform:scaleX(1.1355);font-weight:bold;">?</span>
<!-- part_right -->
<svg class="i" style="left:0;top:0;font-family:'Liberation Sans',sans-serif" width="1919" height="260" viewBox="0 0 1919 260"><path d="M1830 91.500L1837.700 101H1822.300z" fill="#9a9a9a"/><path d="M1830 240.500L1837.700 231H1822.300z" fill="#9a9a9a"/><path d="M1755 166L1765 158.300V173.700z" fill="#9a9a9a"/><path d="M1905 166L1895 158.300V173.700z" fill="#9a9a9a"/><path d="M1809 101.500C1797 105.500 1789 111.500 1782.500 120" fill="none" stroke="#9a9a9a" stroke-width="5"/><path d="M1776 125L1778.500 110.500 1789.500 121.500z" fill="#9a9a9a"/><path d="M1851 101.500C1863 105.500 1871 111.500 1877.500 120" fill="none" stroke="#9a9a9a" stroke-width="5"/><path d="M1884 125L1881.500 110.500 1870.500 121.500z" fill="#9a9a9a"/><path d="M1812 137.500H1848L1858.500 148.400V184.200L1848 195H1812L1801.700 184.200V148.400z" fill="#e5e8eb"/><rect x="1808" y="144.200" width="44" height="44.200" rx="9" fill="#fff"/><path d="M1799.500 137.500V196" stroke="#2424ad" stroke-width="1.300"/><path d="M1799.500 196H1858" stroke="#2fba2f" stroke-width="1.300"/><text x="1815.44" y="169.3" font-size="13.2" fill="#111" textLength="27.89" lengthAdjust="spacingAndGlyphs">Right</text><text x="1796.04" y="131.7" font-size="12.5" fill="#5a55d0" textLength="7.33" lengthAdjust="spacingAndGlyphs">Z</text><text x="1795.79" y="200.1" font-size="12.5" fill="#cf3a4a" textLength="6.99" lengthAdjust="spacingAndGlyphs">X</text><text x="1864.79" y="200.1" font-size="12.5" fill="#55bd55" textLength="6.88" lengthAdjust="spacingAndGlyphs">Y</text><g stroke="#333" stroke-width="1.100" stroke-linejoin="round"><path d="M1875.200 222.800l9 2.700v11l-9 4-9-4v-11z" fill="#f3f3f3"/><path d="M1866.200 225.500l9 3.200v11.800l-9-4z" fill="#b9b9b9"/><path d="M1875.200 228.700l9-3.200v11l-9 4z" fill="#e3e3e3"/></g><path d="M1892 229.800h7.800l-3.900 4z" fill="#222"/></svg>
<div class="sp" style="top:400px;height:133px"></div>
<div class="spl" style="top:433px"></div>
<div class="spl" style="top:466px"></div>
<div class="spl" style="top:499px"></div>
<div class="sp" style="top:543.500px;height:165.500px"></div>
<div class="spl" style="top:576px"></div>
<div class="spl" style="top:609px"></div>
<div class="spl" style="top:642px"></div>
<div class="spl" style="top:675px"></div>
<svg class="i" style="left:1894px;top:406px;" width="22" height="22" viewBox="0 0 22 22"><path d="M9 3L21 9.500 19.500 14 2 13.500z" fill="#8f8f8f"/><path d="M8 5l7-4 6 6-3 6z" fill="#a8a8a8"/><rect x="1.500" y="12.500" width="20" height="8" rx="1.500" fill="#d9d9d9" stroke="#8a8a8a" stroke-width="1"/><rect x="1.500" y="12.500" width="7" height="8" rx="1.500" fill="#8a8a8a"/><circle cx="5" cy="16.500" r="1.400" fill="#fff"/></svg>
<svg class="i" style="left:1894px;top:439px;" width="22" height="22" viewBox="0 0 22 22"><g fill="#fff" stroke="#222" stroke-width="1.400" stroke-linejoin="round"><path d="M12.500 7L20 10.500v7l-7.500 3.800L5 17.500v-7z"/><path d="M5 10.500l7.500 3.500 7.500-3.500M12.500 14v7.300" fill="none"/></g><g fill="#1b5cb8"><rect x="1" y="1" width="10.500" height="9"/></g><path d="M1 4h10.500M1 7h10.500M4.500 1v9M8 1v9" stroke="#fff" stroke-width="0.900"/></svg>
<svg class="i" style="left:1894px;top:472px;" width="22" height="22" viewBox="0 0 22 22"><g fill="#ddd" stroke="#222" stroke-width="1.200" stroke-linejoin="round"><path d="M12 8.500l6 2.800v5.500l-6 3-6-3v-5.500z"/><path d="M6 11.300l6 2.800 6-2.800M12 14v5.800" fill="none"/></g><rect x="1" y="1" width="10.500" height="9" fill="#333"/><path d="M1 4h10.500M1 7h10.500M4.500 1v9M8 1v9" stroke="#fff" stroke-width="0.900"/><path d="M4.500 10c-2 0-1.500 2-1.500 3.500s-.5 2-1.500 2.300c1 .3 1.500.8 1.500 2.300s-.5 3.500 1.500 3.500M19 8c2 0 1.500 2 1.500 4s.3 2.300 1.300 2.600c-1 .3-1.300.8-1.300 2.600s.5 4-1.500 4" fill="none" stroke="#222" stroke-width="1.200"/></svg>
<svg class="i" style="left:1894px;top:505px;" width="22" height="22" viewBox="0 0 22 22"><rect x="2" y="1" width="10.500" height="9" fill="#333"/><path d="M2 4h10.500M2 7h10.500M5.500 1v9M9 1v9" stroke="#fff" stroke-width="0.900"/><path d="M4 8.500c-2.500 3-2.500 9 0 12.500M19.500 8.500c2.500 3 2.500 9 0 12.500" fill="none" stroke="#222" stroke-width="1.600"/><path d="M6.500 12c2.500-1.500 4 0 5 3.500s2.500 5.500 5 4M16.500 11.500c-2.500 0-4 2.500-5 4s-3 4.500-5.500 3.500" fill="none" stroke="#222" stroke-width="1.900"/></svg>
<div class="abs" style="left:1893px;top:548.500px;width:23px;height:23px;background:#d9d9d9;border-radius:3px"></div>
<svg class="i" style="left:1895px;top:551.5px;" width="19" height="17" viewBox="0 0 19 17"><path d="M9.500 8C8 3 3.500 0 .500 .5c0 3 1.500 6.500 5 8-2 1-3.500 4-2 7.500 2.500-.5 4.500-3 5.500-5.500l.5 1 .5-1c1 2.500 3 5 5.500 5.500 1.500-3.500 0-6.500-2-7.500 3.500-1.500 5-5 5-8-3-.5-7.500 2.500-9 7.500z" fill="#111"/></svg>
<div class="abs" style="left:1893px;top:581.500px;width:23px;height:23px;background:#1b4fbb;border:1.500px solid #0f2f7a"></div>
<span class="t" style="left:1895.19px;top:585.00px;font-size:17px;color:#fff;transform:scaleX(0.6367);font-weight:bold;font-family:'Liberation Serif',serif;">MK</span>
<div class="abs" style="left:1893px;top:614.500px;width:23px;height:23px;background:#d9d9d9;border-radius:3px"></div>
<svg class="i" style="left:1894px;top:616px;" width="21" height="20" viewBox="0 0 21 20"><path d="M1.500 8L19 6l1 10.500L3 18z" fill="#2d2d2d"/><circle cx="7.500" cy="11.800" r="2.800" fill="#fff"/><circle cx="14.500" cy="11" r="2.800" fill="#fff"/><circle cx="7.900" cy="12" r="1.300" fill="#1b5cb8"/><circle cx="14.900" cy="11.200" r="1.300" fill="#1b5cb8"/><path d="M10 7V2.500" stroke="#555" stroke-width="1.500"/><path d="M5 1.500h3M12 1.500h3.500M5.500 4h2M12.500 4h2.500" stroke="#2a5db0" stroke-width="1.100"/><path d="M8 15.500c2 1 4.500 1 6.500-.5" fill="none" stroke="#fff" stroke-width="0.900"/></svg>
<div class="abs" style="left:1893px;top:647.500px;width:23px;height:23px;background:#54b45a;border:1.500px solid #3d9a44"></div>
<svg class="i" style="left:1896px;top:651.5px;" width="17" height="15" viewBox="0 0 17 15"><path d="M1 2c3-1.200 5.500-1 7.500.5V14C6.500 12.700 4 12.500 1 13.500zM16 2c-3-1.200-5.500-1-7.500.5V14c2-1.300 4.500-1.500 7.500-.5z" fill="#fff"/></svg>
<div class="abs" style="left:1893px;top:680.500px;width:23px;height:23px;background:#1b4fbb;border:1.500px solid #0f2f7a"></div>
<svg class="i" style="left:1896px;top:684.5px;" width="17" height="15" viewBox="0 0 17 15"><path d="M1 2c3-1.200 5.500-1 7.500.5V14C6.500 12.700 4 12.500 1 13.500zM16 2c-3-1.200-5.500-1-7.500.5V14c2-1.300 4.500-1.500 7.500-.5z" fill="#fff"/></svg>
<svg class="i" style="left:1669.5px;top:1023.5px;" width="19" height="19" viewBox="0 0 19 19"><circle cx="9" cy="10" r="8.300" fill="none" stroke="#333" stroke-width="1.100"/><circle cx="9" cy="10" r="1.400" fill="#fff" stroke="#555" stroke-width="0.800"/><circle cx="15.300" cy="3.800" r="1.700" fill="#fff" stroke="#4a5fa8" stroke-width="0.800"/></svg>
<span class="t" style="left:1697.51px;top:1030.00px;font-size:13.3px;color:#5a5a5a;transform:scaleX(1.0241);">Diameter:</span>
<span class="t" style="left:1757.98px;top:1031.00px;font-size:13px;color:#444;transform:scaleX(0.9274);font-family:'Liberation Mono',monospace;">0.752</span>
<div class="abs" style="left:1758.500px;top:1043px;width:35px;height:1px;background:#d0d0d0"></div>
<span class="t" style="left:1795.13px;top:1030.00px;font-size:13.3px;color:#5a5a5a;transform:scaleX(1.0936);">in</span>
<svg class="i" style="left:1822px;top:1030px;" width="17" height="12.5" viewBox="0 0 17 12.5"><g fill="none" stroke="#333" stroke-width="1.200"><ellipse cx="10.500" cy="3.500" rx="5.500" ry="2.800"/><ellipse cx="10.500" cy="3.500" rx="2.300" ry="1"/><path d="M5 3.500V9M16 3.500v7.500c0 .7-.5 1-1.200 1H1V8h9c3 0 6-1 6-2.500"/><path d="M3.500 10.500v1.500M6 10.500v1.500M8.500 10.500v1.500M11 10.500v1.500M13.500 10v2" stroke-width="0.900"/></g></svg>
<svg class="i" style="left:1855px;top:1030px;" width="20" height="13.5" viewBox="0 0 20 13.5"><g fill="none" stroke="#333" stroke-width="1.300" stroke-linejoin="round"><path d="M1 12.500C1 5.500 5 1 10 1s9 4.500 9 11.500z"/><path d="M6 12.500c0-3 1.800-4.800 4-4.800s4 1.800 4 4.800"/><path d="M3 11c.5-4.500 3.500-8 7-8s6.500 3.500 7 8" stroke-width="0.700" stroke-dasharray="1 1.200"/></g></svg>
<svg class="i" style="left:1893px;top:1029px;" width="15" height="14.5" viewBox="0 0 15 14.5"><g fill="none" stroke="#333" stroke-width="1.100"><path d="M7.500 0.500v11M1.500 2.500h12M1.500 2.500L0.500 9h3zM13.500 2.500L12.500 9h3z"/></g><path d="M0 9h4.500M10.500 9H15" stroke="#333" stroke-width="1.600"/><path d="M0.500 13.300h14" stroke="#333" stroke-width="2.200"/><path d="M3 11.200h9" stroke="#333" stroke-width="1.200"/></svg>
<!-- part_bottom -->
<div id="bbar"></div>
<div class="abs" style="left:40px;top:1050px;width:34px;height:27px;background:#d1d1d1"></div>
<svg class="i" style="left:49px;top:1057px;" width="15" height="15" viewBox="0 0 15 15"><path d="M7.500 0v15M0 7.500h15" stroke="#4a4a4a" stroke-width="2.700"/></svg>
<svg class="i" style="left:74px;top:1050px;" width="172" height="27" viewBox="0 0 172 27"><path d="M0 0H35L41 13.500 35 27H0z" fill="#e9e9e9"/><path d="M35.500 0H164L170 13.500 164 27H35.500L41.500 13.500z" fill="#fff"/><path d="M35.200 0L41.200 13.500 35.200 27" fill="none" stroke="#d0d0d0" stroke-width="0.800"/></svg>
<svg class="i" style="left:83px;top:1053.8px;" width="18" height="17.5" viewBox="0 0 18 17.5"><path d="M9 0L0 8.300V17.500h6.300v-6h5.400v6H18V8.300L15.300 5.800V0.800h-2.800v2.400z" fill="#555"/></svg>
<div class="abs" style="left:128px;top:1053px;width:96.500px;height:22px;overflow:hidden"><span class="t" style="left:1.56px;top:3.00px;font-size:14.5px;color:#5c5c5c;transform:scaleX(0.9799);">Exercise 6 - Dire</span></div>
<div class="abs" style="left:246.500px;top:1050px;width:200.500px;height:26.500px;background:#ececec;border:1px solid #cdcdcd;border-top:none;border-radius:0 0 5px 5px"></div>
<svg class="i" style="left:260px;top:1056.2px;" width="13.5" height="13.5" viewBox="0 0 13.5 13.5"><circle cx="6.750" cy="6.750" r="6.750" fill="#6ea6dd"/><circle cx="6.750" cy="3.300" r="1.500" fill="#fff"/><path d="M6.750 5.800v5.200" stroke="#fff" stroke-width="2.400"/></svg>
<svg class="i" style="left:278px;top:1054px;" width="18" height="18" viewBox="0 0 18 18"><g stroke="#333" stroke-width="1.100" stroke-linejoin="round"><path d="M0.700 3.500L3.500 0.700H14.500L17.300 3.500V17.300H3.500L0.700 14.500z" fill="#fff"/><path d="M3.500 3.500h13.800M3.500 3.500V17.300M0.700 3.500h2.800" fill="none"/><path d="M2.500 2.200h9.500v9H2.500z" fill="#7d7d7d" stroke="#555"/><path d="M12 2.200l2.500 1.800v8.800l-2.500-1.600zM2.500 11.200l2.500 1.600h9.500L12 11.200z" fill="#666" stroke="#555" stroke-width="0.700"/></g></svg>
<span class="t" style="left:299.08px;top:1057.00px;font-size:14.5px;color:#666;transform:scaleX(0.9617);">Exercise 6 Assembly</span>
<div class="abs" style="left:449px;top:1050px;width:200px;height:27.500px;background:#fff;border-bottom:2px solid #2456b3;border-radius:0 0 5px 5px"></div>
<svg class="i" style="left:460.5px;top:1054px;" width="18" height="18" viewBox="0 0 18 18"><g fill="#fff" stroke="#333" stroke-width="1.200" stroke-linejoin="round"><path d="M0.700 6L3 3.500h4.500V17.300H0.700z"/><path d="M3 3.500V15l-2.300 2.300" fill="none"/><path d="M7.500 3L10.500 0.700h4.300L17.300 3V17.300H7.500z"/><path d="M10.500 0.700V15h4.300V0.700M7.500 17.300L10.500 15M17.300 17.300L14.800 15" fill="none"/></g></svg>
<span class="t" style="left:481.40px;top:1057.00px;font-size:14.5px;color:#222;transform:scaleX(0.9520);">Exercise 6 Part Studio</span>
</body></html>
